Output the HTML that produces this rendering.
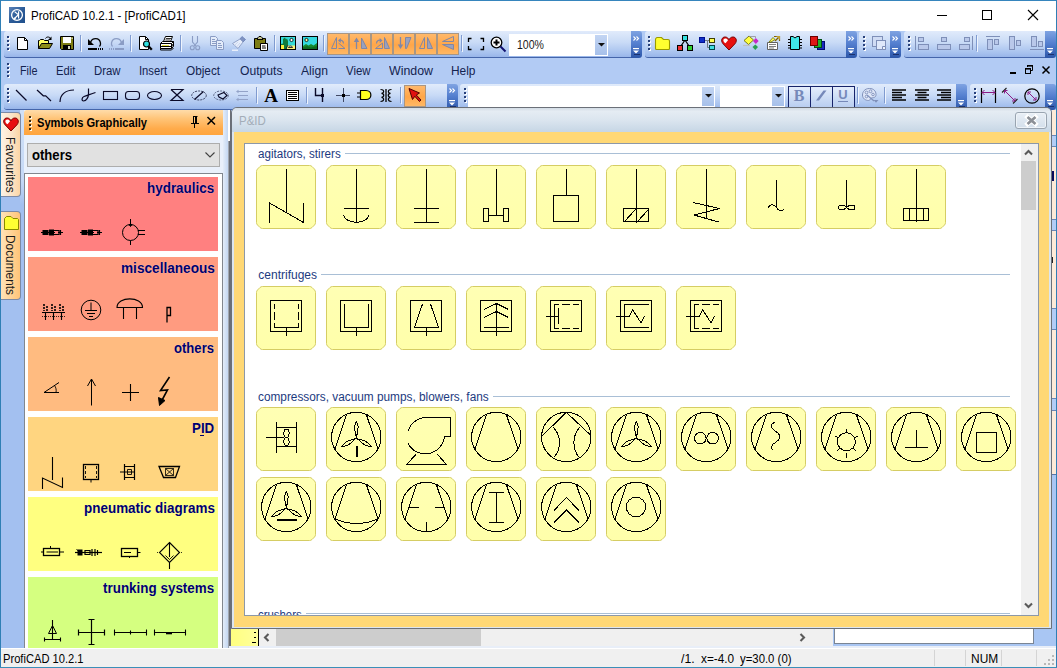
<!DOCTYPE html>
<html lang="en"><head><meta charset="utf-8"><title>ProfiCAD 10.2.1 - [ProfiCAD1]</title>
<style>
*{box-sizing:border-box;margin:0;padding:0}
html,body{width:1057px;height:668px;overflow:hidden;background:#fff}
body{font-family:"Liberation Sans",sans-serif;font-size:12px;color:#000}
#win{position:absolute;left:0;top:0;width:1057px;height:668px;overflow:hidden;background:#b2cbf4}
.abs{position:absolute}
svg{position:absolute;overflow:visible}
/* title */
#title{position:absolute;left:0;top:0;width:1057px;height:31px;background:#fff;border-top:1px solid #3685bd}
/* toolbars */
.tb{position:absolute;height:26px;border-radius:3px 0 0 3px;background:linear-gradient(#e1ebfb 0%,#c8daf6 45%,#a6c1ee 85%,#98b5e9 100%);border-bottom:1px solid #4465aa}
.chev{position:absolute;top:0;width:11px;height:26px;border-radius:0 3px 3px 0;background:linear-gradient(#7fa3e2 0%,#5580d0 45%,#2c56a8 100%)}
.obtn{position:absolute;border:1px solid #a89684;background:linear-gradient(#ffb96c 0%,#ffa648 55%,#ffb865 100%)}
.combo{position:absolute;background:#fff}
.combo .cbtn{position:absolute;right:1px;top:1px;bottom:1px;width:12px;background:linear-gradient(#c3d5f3,#a6c0ea)}
.nbtn{position:absolute;width:23px;height:22px;border:1px solid #16236a;background:linear-gradient(#e4edfb,#b9cef0)}
.vtab{position:absolute;left:1px;width:20px;border:1px solid #7d8aa5;border-left:none;border-radius:0 4px 4px 0}
#pid{position:absolute;left:231px;top:107px;width:821px;height:522px;border:1px solid #6b7078;border-radius:6px 6px 0 0;background:#dce5ee;overflow:hidden}
.pidtitle{position:absolute;left:0;top:0;width:100%;height:24px;background:linear-gradient(#d3dce5 0%,#e5ecf3 14%,#dbe5ef 50%,#c6d6e5 100%)}
.pidclose{position:absolute;left:783px;top:4px;width:32px;height:17px;border:1px solid #99a4b0;border-radius:3px;background:linear-gradient(#e9eff6,#d3dfeb);box-shadow:inset 0 0 0 1px #eef3f8}
.pidframe{position:absolute;left:2px;top:24px;right:2px;bottom:1px;background:#ffd875}
#pidin{position:absolute;left:12px;top:35px;width:795px;height:473px;background:#fff;border:1px solid #8c98a8;overflow:hidden}
#status{position:absolute;left:0;top:648px;width:1057px;height:20px;background:#f0f0f0;border-top:1px solid #fff}

</style></head>
<body>
<div id="win">
<div id="title">
<svg style="left:9px;top:6px" width="16" height="16" viewBox="0 0 16 16">
<defs><linearGradient id="gi" x1="0" y1="0" x2="1" y2="1"><stop offset="0" stop-color="#5b82b8"/><stop offset=".5" stop-color="#2c5c98"/><stop offset="1" stop-color="#1f4f8c"/></linearGradient></defs>
<rect width="16" height="16" fill="url(#gi)"/>
<circle cx="8" cy="8" r="5.4" fill="none" stroke="#fff" stroke-width="1.3"/>
<path d="M9.6 4.3V11.4M9.4 7.8L5.6 4.6M9.4 7.8L5.2 11.8" fill="none" stroke="#fff" stroke-width="1.2"/>
<path d="M4.6 12.4L7.3 11.6L5.6 10.2Z" fill="#fff"/>
</svg>
<div class="abs" style="left:30.50px;top:7.94px;font-size:12px;line-height:14.40px;color:#000;white-space:nowrap;transform-origin:0 0;transform:scaleX(0.9613);">ProfiCAD 10.2.1 - [ProfiCAD1]</div>
<svg style="left:930px;top:0" width="127" height="30" viewBox="930 1 127 30" fill="none" stroke="#000" stroke-width="1">
<path d="M937 15.5H947"/>
<rect x="982.5" y="10.5" width="9" height="9"/>
<path d="M1028 10L1038 20M1038 10L1028 20" stroke-width="1.1"/>
</svg>
</div>
<!-- toolbar row 1 -->
<div class="tb" style="left:4px;top:31px;width:628px;height:27px"></div>
<div class="chev" style="left:631px;top:31px;width:11px;height:27px"><svg style="left:2px;top:5px" width="8" height="6" viewBox="0 0 8 6"><path d="M.5 .5L2.500 2.500L.5 4.500M3.500 .5L5.500 2.500L3.500 4.500" fill="none" stroke="#fff" stroke-width="1.100"/></svg><svg style="left:2px;top:17px" width="8" height="7" viewBox="0 0 8 7"><rect x="0" y="0" width="6" height="1.200" fill="#fff"/><path d="M0 2.500H6L3 5.500Z" fill="#fff"/><path d="M1 6.500H7" stroke="#14265c" stroke-width=".8"/></svg></div>
<i class="abs" style="left:8px;top:37px;width:2px;height:2px;background:#fff"></i><i class="abs" style="left:7px;top:36px;width:2px;height:2px;background:#27407a"></i><i class="abs" style="left:8px;top:41px;width:2px;height:2px;background:#fff"></i><i class="abs" style="left:7px;top:40px;width:2px;height:2px;background:#27407a"></i><i class="abs" style="left:8px;top:45px;width:2px;height:2px;background:#fff"></i><i class="abs" style="left:7px;top:44px;width:2px;height:2px;background:#27407a"></i><i class="abs" style="left:8px;top:49px;width:2px;height:2px;background:#fff"></i><i class="abs" style="left:7px;top:48px;width:2px;height:2px;background:#27407a"></i>
<svg style="left:15px;top:35px" width="16" height="16" viewBox="0 0 16 16"><path d="M2.5 2.5H9.5L12.5 5.5V14.5H2.5Z" fill="#fff" stroke="#000"/><path d="M9.5 2.5V5.5H12.5" fill="none" stroke="#000"/></svg>
<svg style="left:37px;top:35px" width="16" height="16" viewBox="0 0 16 16"><path d="M1.5 13.5V5.5H2.5L3.5 4.5H6.5L7.5 5.5H11.5V8" fill="#ffff66" stroke="#000"/><path d="M1.5 13.5L4.5 8.5H15.5L12.5 13.5Z" fill="#8e8e1a" stroke="#000"/><path d="M8.5 3.5C9.5 1.5 12.5 1.5 13.5 3.5" fill="none" stroke="#000"/><path d="M14.5 1.5V5H11Z" fill="#000"/></svg>
<svg style="left:59px;top:35px" width="16" height="16" viewBox="0 0 16 16"><path d="M1.5 1.5H14.5V14.5H2.5L1.5 13.5Z" fill="#7d7d14" stroke="#000"/><rect x="4" y="2" width="8" height="6" fill="#fff"/><rect x="4" y="10" width="8" height="5" fill="#000"/><rect x="9" y="11" width="2" height="3" fill="#d8d8c0"/><rect x="12.6" y="2.6" width="1" height="1.4" fill="#fff"/></svg>
<i class="abs" style="left:80px;top:35px;width:1px;height:16px;background:#7f9bd0"></i><i class="abs" style="left:81px;top:36px;width:1px;height:16px;background:#eef4fd"></i>
<svg style="left:87px;top:35px" width="16" height="16" viewBox="0 0 16 16"><path d="M3.5 7.5C5 2.5 12.5 2 13.5 8C13.8 10 13 11 12.5 11.5" fill="none" stroke="#000" stroke-width="1.3"/><path d="M1 4V10H7Z" fill="#000"/><rect x="1" y="13" width="9" height="2" fill="#000"/><rect x="11" y="13" width="1" height="2" fill="#000"/><rect x="13" y="13" width="1" height="2" fill="#000"/><rect x="15" y="13" width="1" height="2" fill="#000"/></svg>
<svg style="left:109px;top:35px" width="16" height="16" viewBox="0 0 16 16"><path d="M12.5 7.5C11 2.5 3.5 2 2.5 8C2.2 10 3 11 3.5 11.5" fill="none" stroke="#8a9cc4" stroke-width="1.3"/><path d="M15 4V10H9Z" fill="#8a9cc4"/><rect x="6" y="13" width="9" height="2" fill="#8a9cc4"/><rect x="4" y="13" width="1" height="2" fill="#8a9cc4"/><rect x="2" y="13" width="1" height="2" fill="#8a9cc4"/><rect x="0" y="13" width="1" height="2" fill="#8a9cc4"/></svg>
<i class="abs" style="left:130px;top:35px;width:1px;height:16px;background:#7f9bd0"></i><i class="abs" style="left:131px;top:36px;width:1px;height:16px;background:#eef4fd"></i>
<svg style="left:137px;top:35px" width="16" height="16" viewBox="0 0 16 16"><path d="M2.5 1.5H8.5L11.5 4.5V14.5H2.5Z" fill="#fff" stroke="#000"/><path d="M8.5 1.5V4.5H11.5" fill="none" stroke="#000"/><circle cx="9.5" cy="9" r="3" fill="#30e0e0" stroke="#000" stroke-width="1.2"/><path d="M11.8 11.5L14.8 14.8" stroke="#000" stroke-width="2.2"/></svg>
<svg style="left:159px;top:35px" width="16" height="16" viewBox="0 0 16 16"><path d="M4.5 6.5L6.5 1.5H13.5L11.5 6.5Z" fill="#fff" stroke="#000"/><path d="M7 3.5H12M6.3 5H11" stroke="#000" stroke-width=".8"/><path d="M1.5 8.5L3.5 6.5H14.5V11.5L12.5 13.5H1.5Z" fill="#fff" stroke="#000"/><path d="M1.5 8.5H12.5L14.5 6.5M12.5 8.5V13.5" fill="none" stroke="#000"/><path d="M2 11.5H12" stroke="#000"/><rect x="3" y="10" width="7" height="1" fill="#e8e040"/><path d="M1.5 13.5V15H12.5L14.5 13" fill="none" stroke="#000"/><path d="M13.5 9V11.5" stroke="#000" stroke-width=".7"/></svg>
<i class="abs" style="left:180px;top:35px;width:1px;height:16px;background:#7f9bd0"></i><i class="abs" style="left:181px;top:36px;width:1px;height:16px;background:#eef4fd"></i>
<svg style="left:187px;top:35px" width="16" height="16" viewBox="0 0 16 16"><path d="M5.5 1V7L9 11M10.5 1V7L7 11" fill="none" stroke="#8a9cc4" stroke-width="1.1"/><circle cx="5.3" cy="12.7" r="2" fill="none" stroke="#8a9cc4" stroke-width="1.1"/><circle cx="10.7" cy="12.7" r="2" fill="none" stroke="#8a9cc4" stroke-width="1.1"/></svg>
<svg style="left:209px;top:35px" width="16" height="16" viewBox="0 0 16 16"><path d="M1.5 1.5H6.5L8.5 3.5V10.5H1.5Z" fill="#e4ecfa" stroke="#8a9cc4"/><path d="M3 4.5H6M3 6.5H7M3 8.5H7" stroke="#8a9cc4"/><path d="M7.5 5.5H12.5L14.5 7.5V14.5H7.5Z" fill="#e4ecfa" stroke="#8a9cc4"/><path d="M9 8.5H12M9 10.5H13M9 12.5H13" stroke="#8a9cc4"/></svg>
<svg style="left:231px;top:35px" width="16" height="16" viewBox="0 0 16 16"><path d="M11 1.5L14.5 4.5L12 7L9 4Z" fill="#7f93c2" stroke="#6a7fb5" stroke-width=".8"/><path d="M9 4L12 7L7 13.5L1.5 8.5Z" fill="#e6edfa" stroke="#8a9cc4" stroke-width=".9"/><path d="M3.5 10.5L7 7M5.5 12L9 8" stroke="#c5d2ec" stroke-width=".8"/><rect x="1" y="14.5" width="6" height="1.5" fill="#e8eefa"/></svg>
<svg style="left:253px;top:35px" width="16" height="16" viewBox="0 0 16 16"><path d="M1.5 3.5H12.5V13.5H1.5Z" fill="#7d7d14" stroke="#000"/><path d="M4.5 4.5V3L6 1.5H8L9.5 3V4.5Z" fill="#c8c890" stroke="#000"/><path d="M7.5 8.5H14.5V15.5H7.5Z" fill="#fff" stroke="#000"/><path d="M9 11H12.5M9 13H13" stroke="#000" stroke-width="1"/><path d="M4 4.5H10" stroke="#000"/></svg>
<i class="abs" style="left:274px;top:35px;width:1px;height:16px;background:#7f9bd0"></i><i class="abs" style="left:275px;top:36px;width:1px;height:16px;background:#eef4fd"></i>
<svg style="left:280px;top:35px" width="16" height="16" viewBox="0 0 16 16"><rect x=".5" y="1.5" width="15" height="13" fill="#35d9d9" stroke="#000"/><path d="M1 14V9L3 8.5V4L5 2.5L6 4.5L7 3.5L8 6V10L6 14Z" fill="#117a3a"/><path d="M1 10H4V14H1Z" fill="#ffef3a"/><path d="M7 14V10.5H15V14Z" fill="#fff27a"/><path d="M8.5 12.5C9 10.5 12 10.5 12.5 12.5Z" fill="#fff" stroke="#000" stroke-width=".8"/><circle cx="11.5" cy="5" r="1.6" fill="#fff" stroke="#000" stroke-width=".8"/><path d="M6 14L8 10" stroke="#000" stroke-width=".8"/></svg>
<svg style="left:302px;top:35px" width="16" height="16" viewBox="0 0 16 16"><rect x=".5" y="1.5" width="15" height="13" fill="#35d9e0" stroke="#000"/><path d="M1 14V11L4 9L6.5 10.5L9 9L11.5 10.5L15 8V14Z" fill="#168a2e"/><path d="M1 14V12.5L5 11L9 12.5L15 11V14Z" fill="#0e6a22"/><circle cx="4.5" cy="5" r="1.6" fill="#fffca0" stroke="#000" stroke-width=".8"/></svg>
<i class="abs" style="left:323px;top:35px;width:1px;height:16px;background:#7f9bd0"></i><i class="abs" style="left:324px;top:36px;width:1px;height:16px;background:#eef4fd"></i>
<div class="obtn" style="left:327px;top:33px;width:22px;height:22px"></div>
<svg style="left:330px;top:35px" width="16" height="16" viewBox="0 0 16 16"><path d="M6.5 2.5V13.5H1.5Z" fill="none" stroke="#8087a6"/><path d="M8.5 13.5H15L8.5 8" fill="none" stroke="#8087a6"/><path d="M9 5.5C11.5 4.5 13.5 6 13.5 8.5" fill="none" stroke="#8087a6" stroke-width="1.2"/><path d="M8 5.5L10.8 3V8Z" fill="#8087a6"/></svg>
<div class="obtn" style="left:349px;top:33px;width:22px;height:22px"></div>
<svg style="left:352px;top:35px" width="16" height="16" viewBox="0 0 16 16"><path d="M4.5 4V14" stroke="#8087a6" stroke-width="1.3"/><path d="M1.8 7L4.5 2.5L7.2 7Z" fill="#8087a6"/><path d="M9.5 3V13.5H15Z" fill="#9aa1bd" stroke="#8087a6"/></svg>
<div class="obtn" style="left:371px;top:33px;width:22px;height:22px"></div>
<svg style="left:374px;top:35px" width="16" height="16" viewBox="0 0 16 16"><path d="M10.5 2.5V13.5H15.5Z" fill="#9aa1bd" stroke="#8087a6"/><path d="M1.5 13.5H8.5V8Z" fill="none" stroke="#8087a6"/><path d="M7 5.5C4.5 4.5 2.5 6 2.5 8.5" fill="none" stroke="#8087a6" stroke-width="1.2"/><path d="M8.5 5.5L5.7 3V8Z" fill="#8087a6"/></svg>
<div class="obtn" style="left:393px;top:33px;width:22px;height:22px"></div>
<svg style="left:396px;top:35px" width="16" height="16" viewBox="0 0 16 16"><path d="M4.5 2V11" stroke="#8087a6" stroke-width="1.3"/><path d="M1.8 9.5L4.5 14L7.2 9.5Z" fill="#8087a6"/><path d="M9.5 2.5H15L10.5 13.5H9.5Z" fill="#9aa1bd" stroke="#8087a6"/></svg>
<div class="obtn" style="left:415px;top:33px;width:22px;height:22px"></div>
<svg style="left:418px;top:35px" width="16" height="16" viewBox="0 0 16 16"><path d="M6.5 2.5V13.5H1.5Z" fill="none" stroke="#8087a6"/><path d="M9.5 2.5V13.5H14.5Z" fill="#9aa1bd" stroke="#8087a6"/></svg>
<div class="obtn" style="left:437px;top:33px;width:22px;height:22px"></div>
<svg style="left:440px;top:35px" width="16" height="16" viewBox="0 0 16 16"><path d="M13.5 6.5H2.5L13.5 1.5Z" fill="none" stroke="#8087a6"/><path d="M13.5 9.5H2.5L13.5 14.5Z" fill="#9aa1bd" stroke="#8087a6"/></svg>
<i class="abs" style="left:461px;top:35px;width:1px;height:16px;background:#7f9bd0"></i><i class="abs" style="left:462px;top:36px;width:1px;height:16px;background:#eef4fd"></i>
<svg style="left:468px;top:35px" width="16" height="16" viewBox="0 0 16 16"><path d="M3.500 3.500H.5V7M.5 11V14.500H3.500M12.500 3.500H15.500V7M15.500 11V14.500H12.500" fill="none" stroke="#000" stroke-width="1.300"/></svg>
<svg style="left:490px;top:35px" width="16" height="16" viewBox="0 0 16 16"><circle cx="6.500" cy="7.500" r="5.300" fill="#fff" stroke="#000" stroke-width="1.300"/><path d="M3.500 7.500H9.500M6.500 4.500V10.500" stroke="#000" stroke-width="2"/><path d="M10.500 11.500L15.500 16.500" stroke="#101070" stroke-width="2"/></svg>
<div class="combo" style="left:509px;top:34px;width:99px;height:22px"><div class="cbtn"><svg style="left:3px;top:8px" width="7" height="4" viewBox="0 0 7 4"><path d="M0 0H7L3.500 3.600Z" fill="#101010"/></svg></div></div>
<div class="abs" style="left:516.50px;top:37.94px;font-size:12px;line-height:14.40px;color:#1a1a1a;white-space:nowrap;transform-origin:0 0;transform:scaleX(0.8797);">100%</div>
<div class="tb" style="left:645px;top:31px;width:202px;height:27px"></div>
<div class="chev" style="left:846px;top:31px;width:11px;height:27px"><svg style="left:2px;top:5px" width="8" height="6" viewBox="0 0 8 6"><path d="M.5 .5L2.500 2.500L.5 4.500M3.500 .5L5.500 2.500L3.500 4.500" fill="none" stroke="#fff" stroke-width="1.100"/></svg><svg style="left:2px;top:17px" width="8" height="7" viewBox="0 0 8 7"><rect x="0" y="0" width="6" height="1.200" fill="#fff"/><path d="M0 2.500H6L3 5.500Z" fill="#fff"/><path d="M1 6.500H7" stroke="#14265c" stroke-width=".8"/></svg></div>
<i class="abs" style="left:649px;top:37px;width:2px;height:2px;background:#fff"></i><i class="abs" style="left:648px;top:36px;width:2px;height:2px;background:#27407a"></i><i class="abs" style="left:649px;top:41px;width:2px;height:2px;background:#fff"></i><i class="abs" style="left:648px;top:40px;width:2px;height:2px;background:#27407a"></i><i class="abs" style="left:649px;top:45px;width:2px;height:2px;background:#fff"></i><i class="abs" style="left:648px;top:44px;width:2px;height:2px;background:#27407a"></i><i class="abs" style="left:649px;top:49px;width:2px;height:2px;background:#fff"></i><i class="abs" style="left:648px;top:48px;width:2px;height:2px;background:#27407a"></i>
<svg style="left:655px;top:35px" width="16" height="16" viewBox="0 0 16 16"><path d="M.5 13.500V4.500Q.5 3 2 2.500H6.500L8.500 4.500H13Q14.500 4.500 14.500 6V13.500Q14.500 14.500 13.500 14.500H1.500Q.5 14.500 .5 13.500Z" fill="#ffff30" stroke="#9a9a00" stroke-width="1.100"/></svg>
<svg style="left:677px;top:35px" width="16" height="16" viewBox="0 0 16 16"><path d="M8 5L4 11M8 5L12 11" stroke="#000" stroke-width="1.3"/><rect x="5.5" y=".5" width="5" height="5" fill="#35e0e0" stroke="#000"/><rect x=".5" y="10.5" width="5" height="5" fill="#f03030" stroke="#000"/><rect x="10.5" y="10.5" width="5" height="5" fill="#30d030" stroke="#000"/></svg>
<svg style="left:699px;top:35px" width="16" height="16" viewBox="0 0 16 16"><path d="M6 5.500H8.500V12.500H11M8.500 5.500H11" fill="none" stroke="#707880"/><rect x=".5" y="2.500" width="5" height="5" fill="#1030c8" stroke="#001090"/><rect x="10.500" y="3.500" width="5" height="4" fill="#ffff50" stroke="#404000"/><rect x="10.500" y="10.500" width="5" height="4" fill="#40e0e0" stroke="#004848"/></svg>
<svg style="left:721px;top:35px" width="16" height="16" viewBox="0 0 16 16"><path d="M8 15L1.8 8.5C-0.5 5.5 1 2 4 2C6 2 7.3 3.2 8 4.8C8.7 3.2 10 2 12 2C15 2 16.5 5.5 14.2 8.5Z" fill="#e81010" stroke="#7a0000" stroke-width="1"/><path d="M2.500 4.500C3.500 3 6 3.200 7 5.200L4.500 8.200C2.800 7.500 2 5.800 2.500 4.500Z" fill="#fff"/></svg>
<svg style="left:743px;top:35px" width="16" height="16" viewBox="0 0 16 16"><path d="M1 5.500L6 1L10.500 5L5.500 9.500Z" fill="#ffff40" stroke="#707000" stroke-width=".9"/><path d="M0 10.500H7" stroke="#c0c0c0" stroke-width="1.200"/><path d="M6 1.500H12.500V3" fill="none" stroke="#909090" stroke-width=".8"/><path d="M10 6L12.800 3L15.600 6L12.800 9Z" fill="#c828c8"/><path d="M9.500 12L12.300 9.500L15 12L12.300 15Z" fill="#28a050"/></svg>
<svg style="left:765px;top:35px" width="16" height="16" viewBox="0 0 16 16"><path d="M2.5 7.5H12.5V14.5H2.5Z" fill="#fff" stroke="#606060"/><path d="M4 9.5H11M4 11.5H11M4 13H9" stroke="#707070" stroke-width=".9"/><path d="M4 7L8 2.5L10 4.5L6 7Z" fill="#ffff60" stroke="#707000" stroke-width=".8"/><path d="M9 1.5H14.5V6" fill="none" stroke="#806000" stroke-width="1.2"/><path d="M10 6L14.5 1.5" stroke="#806000" stroke-width="1.2"/><path d="M11 1H15V5Z" fill="#c0a030"/></svg>
<svg style="left:787px;top:35px" width="16" height="16" viewBox="0 0 16 16"><path d="M3.5 1.5H6L8 3L10 1.5H12.5V14.5H3.5Z" fill="#40e8e8" stroke="#000"/><path d="M1 4.5H3M1 7.5H3M1 10.5H3M1 13H3M13 4.5H15M13 7.5H15M13 10.5H15M13 13H15" stroke="#000"/></svg>
<svg style="left:809px;top:35px" width="16" height="16" viewBox="0 0 16 16"><rect x="8.5" y="6.5" width="7" height="8" fill="#1828c0" stroke="#000870"/><rect x="5.5" y="4.5" width="7" height="8" fill="#20b030" stroke="#005010"/><rect x="1.5" y="1.5" width="7" height="9" fill="#e01818" stroke="#700000"/></svg>
<div class="tb" style="left:859px;top:31px;width:32px;height:27px"></div>
<div class="chev" style="left:890px;top:31px;width:11px;height:27px"><svg style="left:2px;top:5px" width="8" height="6" viewBox="0 0 8 6"><path d="M.5 .5L2.500 2.500L.5 4.500M3.500 .5L5.500 2.500L3.500 4.500" fill="none" stroke="#fff" stroke-width="1.100"/></svg><svg style="left:2px;top:17px" width="8" height="7" viewBox="0 0 8 7"><rect x="0" y="0" width="6" height="1.200" fill="#fff"/><path d="M0 2.500H6L3 5.500Z" fill="#fff"/><path d="M1 6.500H7" stroke="#14265c" stroke-width=".8"/></svg></div>
<i class="abs" style="left:864px;top:37px;width:2px;height:2px;background:#fff"></i><i class="abs" style="left:863px;top:36px;width:2px;height:2px;background:#27407a"></i><i class="abs" style="left:864px;top:41px;width:2px;height:2px;background:#fff"></i><i class="abs" style="left:863px;top:40px;width:2px;height:2px;background:#27407a"></i><i class="abs" style="left:864px;top:45px;width:2px;height:2px;background:#fff"></i><i class="abs" style="left:863px;top:44px;width:2px;height:2px;background:#27407a"></i><i class="abs" style="left:864px;top:49px;width:2px;height:2px;background:#fff"></i><i class="abs" style="left:863px;top:48px;width:2px;height:2px;background:#27407a"></i>
<svg style="left:871px;top:35px" width="16" height="16" viewBox="0 0 16 16"><rect x="1.5" y="1.5" width="10" height="10" fill="#d0dcf4" stroke="#7e8fb8"/><rect x="5.5" y="5.5" width="9" height="9" fill="#dfe8fa" stroke="#7e8fb8"/><path d="M11.5 11.5H14.5V14.5H11.5Z" fill="#eef3fc" stroke="#7e8fb8"/></svg>
<div class="tb" style="left:904px;top:31px;width:142px;height:27px"></div>
<div class="chev" style="left:1045px;top:31px;width:11px;height:27px"><svg style="left:2px;top:17px" width="8" height="7" viewBox="0 0 8 7"><rect x="0" y="0" width="6" height="1.200" fill="#fff"/><path d="M0 2.500H6L3 5.500Z" fill="#fff"/><path d="M1 6.500H7" stroke="#14265c" stroke-width=".8"/></svg></div>
<i class="abs" style="left:909px;top:37px;width:2px;height:2px;background:#fff"></i><i class="abs" style="left:908px;top:36px;width:2px;height:2px;background:#27407a"></i><i class="abs" style="left:909px;top:41px;width:2px;height:2px;background:#fff"></i><i class="abs" style="left:908px;top:40px;width:2px;height:2px;background:#27407a"></i><i class="abs" style="left:909px;top:45px;width:2px;height:2px;background:#fff"></i><i class="abs" style="left:908px;top:44px;width:2px;height:2px;background:#27407a"></i><i class="abs" style="left:909px;top:49px;width:2px;height:2px;background:#fff"></i><i class="abs" style="left:908px;top:48px;width:2px;height:2px;background:#27407a"></i>
<svg style="left:914px;top:35px" width="16" height="16" viewBox="0 0 16 16"><path d="M1.5 1V15" stroke="#7e8fb8"/><rect x="4.5" y="2.5" width="5" height="4" fill="#b9c8ea" stroke="#7e8fb8"/><rect x="4.5" y="9.5" width="10" height="5" fill="#b9c8ea" stroke="#7e8fb8"/></svg>
<svg style="left:936px;top:35px" width="16" height="16" viewBox="0 0 16 16"><rect x="5.5" y="2.5" width="5" height="4" fill="#b9c8ea" stroke="#7e8fb8"/><rect x="1.5" y="9.5" width="13" height="5" fill="#b9c8ea" stroke="#7e8fb8"/></svg>
<svg style="left:958px;top:35px" width="16" height="16" viewBox="0 0 16 16"><path d="M14.5 1V15" stroke="#7e8fb8"/><rect x="6.5" y="2.5" width="5" height="4" fill="#b9c8ea" stroke="#7e8fb8"/><rect x="1.5" y="9.5" width="10" height="5" fill="#b9c8ea" stroke="#7e8fb8"/></svg>
<i class="abs" style="left:976px;top:35px;width:1px;height:16px;background:#7f9bd0"></i><i class="abs" style="left:977px;top:36px;width:1px;height:16px;background:#eef4fd"></i>
<svg style="left:985px;top:35px" width="16" height="16" viewBox="0 0 16 16"><path d="M1 1.5H15" stroke="#7e8fb8"/><rect x="2.5" y="4.5" width="5" height="10" fill="#b9c8ea" stroke="#7e8fb8"/><rect x="9.5" y="4.5" width="4" height="5" fill="#b9c8ea" stroke="#7e8fb8"/></svg>
<svg style="left:1007px;top:35px" width="16" height="16" viewBox="0 0 16 16"><rect x="2.5" y="1.5" width="5" height="13" fill="#b9c8ea" stroke="#7e8fb8"/><rect x="9.5" y="5.5" width="4" height="5" fill="#b9c8ea" stroke="#7e8fb8"/></svg>
<svg style="left:1029px;top:35px" width="16" height="16" viewBox="0 0 16 16"><path d="M1 14.5H15" stroke="#7e8fb8"/><rect x="2.5" y="1.5" width="5" height="10" fill="#b9c8ea" stroke="#7e8fb8"/><rect x="9.5" y="6.5" width="4" height="5" fill="#b9c8ea" stroke="#7e8fb8"/></svg>
<!-- menu bar -->
<i class="abs" style="left:8px;top:64px;width:2px;height:2px;background:#fff"></i><i class="abs" style="left:7px;top:63px;width:2px;height:2px;background:#27407a"></i><i class="abs" style="left:8px;top:68px;width:2px;height:2px;background:#fff"></i><i class="abs" style="left:7px;top:67px;width:2px;height:2px;background:#27407a"></i><i class="abs" style="left:8px;top:72px;width:2px;height:2px;background:#fff"></i><i class="abs" style="left:7px;top:71px;width:2px;height:2px;background:#27407a"></i><i class="abs" style="left:8px;top:76px;width:2px;height:2px;background:#fff"></i><i class="abs" style="left:7px;top:75px;width:2px;height:2px;background:#27407a"></i>
<div class="abs" style="left:20.40px;top:63.94px;font-size:12px;line-height:14.40px;color:#14234f;white-space:nowrap;transform-origin:0 0;transform:scaleX(0.8999);">File</div>
<div class="abs" style="left:56.40px;top:63.94px;font-size:12px;line-height:14.40px;color:#14234f;white-space:nowrap;transform-origin:0 0;transform:scaleX(0.9334);">Edit</div>
<div class="abs" style="left:94.20px;top:63.94px;font-size:12px;line-height:14.40px;color:#14234f;white-space:nowrap;transform-origin:0 0;transform:scaleX(0.9464);">Draw</div>
<div class="abs" style="left:139.40px;top:63.94px;font-size:12px;line-height:14.40px;color:#14234f;white-space:nowrap;transform-origin:0 0;transform:scaleX(0.9363);">Insert</div>
<div class="abs" style="left:186.40px;top:63.94px;font-size:12px;line-height:14.40px;color:#14234f;white-space:nowrap;transform-origin:0 0;transform:scaleX(0.9832);">Object</div>
<div class="abs" style="left:239.50px;top:63.94px;font-size:12px;line-height:14.40px;color:#14234f;white-space:nowrap;transform-origin:0 0;transform:scaleX(1.0113);">Outputs</div>
<div class="abs" style="left:300.50px;top:63.94px;font-size:12px;line-height:14.40px;color:#14234f;white-space:nowrap;transform-origin:0 0;transform:scaleX(1.0118);">Align</div>
<div class="abs" style="left:346.00px;top:63.94px;font-size:12px;line-height:14.40px;color:#14234f;white-space:nowrap;transform-origin:0 0;transform:scaleX(0.9499);">View</div>
<div class="abs" style="left:389.00px;top:63.94px;font-size:12px;line-height:14.40px;color:#14234f;white-space:nowrap;transform-origin:0 0;transform:scaleX(1.0309);">Window</div>
<div class="abs" style="left:451.00px;top:63.94px;font-size:12px;line-height:14.40px;color:#14234f;white-space:nowrap;transform-origin:0 0;transform:scaleX(0.9927);">Help</div>
<svg style="left:1005px;top:62px" width="50" height="16" viewBox="1005 62 50 16"><rect x="1010" y="72" width="6" height="2" fill="#000"/>
<path d="M1027.5 67V65.5H1032.5V70.5H1031" fill="none" stroke="#000" stroke-width="1"/><rect x="1027" y="65" width="6" height="1.6" fill="#000"/>
<rect x="1025.500" y="68.500" width="5" height="5" fill="none" stroke="#000"/><rect x="1025" y="68" width="6" height="1.6" fill="#000"/>
<path d="M1042.500 66.500L1049.500 73.500M1049.500 66.500L1042.500 73.500" stroke="#000" stroke-width="1.500"/></svg>
<!-- toolbar row 3 -->
<div class="tb" style="left:4px;top:84px;width:444px;height:26px"></div>
<div class="chev" style="left:447px;top:84px;width:11px;height:26px"><svg style="left:2px;top:4px" width="8" height="6" viewBox="0 0 8 6"><path d="M.5 .5L2.500 2.500L.5 4.500M3.500 .5L5.500 2.500L3.500 4.500" fill="none" stroke="#fff" stroke-width="1.100"/></svg><svg style="left:2px;top:16px" width="8" height="7" viewBox="0 0 8 7"><rect x="0" y="0" width="6" height="1.200" fill="#fff"/><path d="M0 2.500H6L3 5.500Z" fill="#fff"/><path d="M1 6.500H7" stroke="#14265c" stroke-width=".8"/></svg></div>
<i class="abs" style="left:8px;top:89px;width:2px;height:2px;background:#fff"></i><i class="abs" style="left:7px;top:88px;width:2px;height:2px;background:#27407a"></i><i class="abs" style="left:8px;top:93px;width:2px;height:2px;background:#fff"></i><i class="abs" style="left:7px;top:92px;width:2px;height:2px;background:#27407a"></i><i class="abs" style="left:8px;top:97px;width:2px;height:2px;background:#fff"></i><i class="abs" style="left:7px;top:96px;width:2px;height:2px;background:#27407a"></i><i class="abs" style="left:8px;top:101px;width:2px;height:2px;background:#fff"></i><i class="abs" style="left:7px;top:100px;width:2px;height:2px;background:#27407a"></i>
<svg style="left:15px;top:87px" width="16" height="16" viewBox="0 0 16 16"><path d="M1 3L11.5 13.5" stroke="#0a0a28" stroke-width="1.2"/></svg>
<svg style="left:37px;top:87px" width="16" height="16" viewBox="0 0 16 16"><path d="M0 3L6.3 8.8H8.7L14 14" fill="none" stroke="#0a0a28" stroke-width="1.2"/></svg>
<svg style="left:59px;top:87px" width="16" height="16" viewBox="0 0 16 16"><path d="M1 15C1 8 6 3 15 3" fill="none" stroke="#0a0a28" stroke-width="1.2"/></svg>
<svg style="left:81px;top:87px" width="16" height="16" viewBox="0 0 16 16"><path d="M7.5 1.5V7C7.5 10 5.5 14 2.5 14C0.5 14 0.5 10.5 3 9.5C6 8.5 10 7 14.5 5.5" fill="none" stroke="#0a0a28" stroke-width="1.2"/></svg>
<svg style="left:103px;top:87px" width="16" height="16" viewBox="0 0 16 16"><rect x=".5" y="4.5" width="14" height="8" fill="none" stroke="#0a0a28" stroke-width="1.1"/></svg>
<svg style="left:125px;top:87px" width="16" height="16" viewBox="0 0 16 16"><rect x=".5" y="4.5" width="14" height="8" rx="3" fill="none" stroke="#0a0a28" stroke-width="1.1"/></svg>
<svg style="left:147px;top:87px" width="16" height="16" viewBox="0 0 16 16"><ellipse cx="7.5" cy="8.5" rx="7" ry="4" fill="none" stroke="#0a0a28" stroke-width="1.1"/></svg>
<svg style="left:169px;top:87px" width="16" height="16" viewBox="0 0 16 16"><path d="M2 2.5H14L2 13.5H14L2 2.5" fill="none" stroke="#0a0a28" stroke-width="1.2"/></svg>
<svg style="left:191px;top:87px" width="16" height="16" viewBox="0 0 16 16"><ellipse cx="8" cy="8.5" rx="7.3" ry="4.5" fill="none" stroke="#3a4260" stroke-width="1" stroke-dasharray="2 1"/><path d="M3.5 12.5L12.5 4.5" stroke="#0a0a28" stroke-width="1.2"/></svg>
<svg style="left:213px;top:87px" width="16" height="16" viewBox="0 0 16 16"><ellipse cx="8" cy="8.5" rx="7.3" ry="4.5" fill="none" stroke="#5a6484" stroke-width="1" stroke-dasharray="2 1"/><path d="M5 8L11 5.5L14 8.5L10 12L6 10Z" fill="none" stroke="#0a0a28" stroke-width="1.1"/></svg>
<svg style="left:235px;top:87px" width="16" height="16" viewBox="0 0 16 16"><path d="M3 4.5H13M3 8.5H13M3 12.5H13" stroke="#93a3c8" stroke-width="1"/><path d="M1 4.5L3.5 2.8V6.2ZM1 12.5L3.5 10.8V14.2Z" fill="#93a3c8"/></svg>
<i class="abs" style="left:256px;top:87px;width:1px;height:16px;background:#7f9bd0"></i><i class="abs" style="left:257px;top:88px;width:1px;height:16px;background:#eef4fd"></i>
<svg style="left:263px;top:87px" width="16" height="16" viewBox="0 0 16 16"><text x="8" y="15" text-anchor="middle" font-family="Liberation Serif,serif" font-weight="bold" font-size="19" fill="#000">A</text></svg>
<svg style="left:285px;top:87px" width="16" height="16" viewBox="0 0 16 16"><rect x="1.500" y="3.500" width="12" height="10" fill="#fff" stroke="#000" stroke-width="1"/><path d="M3 5.500H12M3 7.500H12M3 9.500H12M3 11.500H12" stroke="#000" stroke-width="1" shape-rendering="crispEdges"/></svg>
<i class="abs" style="left:306px;top:87px;width:1px;height:16px;background:#7f9bd0"></i><i class="abs" style="left:307px;top:88px;width:1px;height:16px;background:#eef4fd"></i>
<svg style="left:313px;top:87px" width="16" height="16" viewBox="0 0 16 16"><path d="M2.5 1V8.5H9.5M9.5 1V15" fill="none" stroke="#0a0a28" stroke-width="1.4"/><rect x="8" y="7" width="3" height="3" fill="#0a0a28"/></svg>
<svg style="left:335px;top:87px" width="16" height="16" viewBox="0 0 16 16"><path d="M1 8.5H15M8.5 1V15" stroke="#333a55" stroke-width=".9"/><rect x="7" y="7" width="3" height="3" fill="#000"/></svg>
<svg style="left:357px;top:87px" width="16" height="16" viewBox="0 0 16 16"><path d="M3.5 3.5H9C15.5 3.5 15.5 12.5 9 12.5H3.5Z" fill="#ffff20" stroke="#000" stroke-width="1.2"/><path d="M0 6H3.5M0 10H3.5" stroke="#000" stroke-width="1.1"/></svg>
<svg style="left:379px;top:87px" width="16" height="16" viewBox="0 0 16 16"><path d="M7 2V15" stroke="#000" stroke-width="1.300"/><path d="M1.500 2.500C5.500 2.500 5.500 6 2.500 6.300C5.500 6.600 5.500 10 2.500 10.300C5.500 10.600 5.500 14.500 1.500 14.500" fill="none" stroke="#000" stroke-width="1.200"/><path d="M12.500 2.500C8.500 2.500 8.500 6 11.500 6.300C8.500 6.600 8.500 10 11.500 10.300C8.500 10.600 8.500 14.500 12.500 14.500" fill="none" stroke="#000" stroke-width="1.200"/></svg>
<i class="abs" style="left:400px;top:87px;width:1px;height:16px;background:#7f9bd0"></i><i class="abs" style="left:401px;top:88px;width:1px;height:16px;background:#eef4fd"></i>
<div class="obtn" style="left:404px;top:85px;width:22px;height:22px"></div>
<svg style="left:407px;top:87px" width="16" height="16" viewBox="0 0 16 16"><path d="M2 1.5L12.5 6L9.3 8L14 13L12.5 14.5L7.8 9.3L5.5 12.5Z" fill="#e01010" stroke="#500000" stroke-width="1"/></svg>
<div class="tb" style="left:460px;top:84px;width:497px;height:26px"></div>
<div class="chev" style="left:956px;top:84px;width:11px;height:26px"><svg style="left:2px;top:16px" width="8" height="7" viewBox="0 0 8 7"><rect x="0" y="0" width="6" height="1.200" fill="#fff"/><path d="M0 2.500H6L3 5.500Z" fill="#fff"/><path d="M1 6.500H7" stroke="#14265c" stroke-width=".8"/></svg></div>
<i class="abs" style="left:465px;top:89px;width:2px;height:2px;background:#fff"></i><i class="abs" style="left:464px;top:88px;width:2px;height:2px;background:#27407a"></i><i class="abs" style="left:465px;top:93px;width:2px;height:2px;background:#fff"></i><i class="abs" style="left:464px;top:92px;width:2px;height:2px;background:#27407a"></i><i class="abs" style="left:465px;top:97px;width:2px;height:2px;background:#fff"></i><i class="abs" style="left:464px;top:96px;width:2px;height:2px;background:#27407a"></i><i class="abs" style="left:465px;top:101px;width:2px;height:2px;background:#fff"></i><i class="abs" style="left:464px;top:100px;width:2px;height:2px;background:#27407a"></i>
<div class="combo" style="left:468px;top:86px;width:247px;height:21px"><div class="cbtn"><svg style="left:3px;top:7px" width="7" height="4" viewBox="0 0 7 4"><path d="M0 0H7L3.500 3.600Z" fill="#101010"/></svg></div></div>
<div class="combo" style="left:720px;top:86px;width:65px;height:21px"><div class="cbtn"><svg style="left:3px;top:7px" width="7" height="4" viewBox="0 0 7 4"><path d="M0 0H7L3.500 3.600Z" fill="#101010"/></svg></div></div>
<div class="nbtn" style="left:788px;top:86px"></div><svg style="left:791px;top:87px" width="16" height="16" viewBox="0 0 16 16"><text x="8" y="14" text-anchor="middle" font-family="Liberation Serif,serif" font-weight="bold" font-size="16" fill="#7689b9">B</text></svg>
<div class="nbtn" style="left:810px;top:86px"></div><svg style="left:813px;top:87px" width="16" height="16" viewBox="0 0 16 16"><path d="M3 13.5L10.5 3.5H13.5L6 13.5Z" fill="#7689b9"/></svg>
<div class="nbtn" style="left:832px;top:86px"></div><svg style="left:835px;top:87px" width="16" height="16" viewBox="0 0 16 16"><text x="8" y="12" text-anchor="middle" font-family="Liberation Sans,sans-serif" font-weight="bold" font-size="13" fill="#7689b9">U</text><rect x="3" y="14" width="10" height="1" fill="#7689b9"/></svg>
<i class="abs" style="left:857px;top:87px;width:1px;height:16px;background:#7f9bd0"></i><i class="abs" style="left:858px;top:88px;width:1px;height:16px;background:#eef4fd"></i>
<svg style="left:862px;top:87px" width="16" height="16" viewBox="0 0 16 16"><path d="M7.5 1.5C2.5 1.5 .5 5 .5 8C.5 11.5 3.5 13.5 6.5 13.5C8.5 13.5 8 11.5 9.5 11C11 10.5 14 11 14 7.5C14 4 11.5 1.5 7.5 1.5Z" fill="#dfe7f8" stroke="#7f90ba"/><circle cx="4.5" cy="5.5" r="1.4" fill="none" stroke="#7f90ba" stroke-width=".9"/><circle cx="8.5" cy="4.3" r="1.4" fill="none" stroke="#7f90ba" stroke-width=".9"/><circle cx="11" cy="7.5" r="1.3" fill="none" stroke="#7f90ba" stroke-width=".9"/><circle cx="4.5" cy="9.5" r="1.3" fill="none" stroke="#7f90ba" stroke-width=".9"/><path d="M5 8L12 14" stroke="#7f90ba" stroke-width="1.2"/><path d="M11.5 13H16.5L14 15.8Z" fill="#7f90ba"/></svg>
<i class="abs" style="left:884px;top:87px;width:1px;height:16px;background:#7f9bd0"></i><i class="abs" style="left:885px;top:88px;width:1px;height:16px;background:#eef4fd"></i>
<svg style="left:891px;top:87px" width="16" height="16" viewBox="0 0 16 16"><path d="M1 3H15M1 5.5H11M1 8H15M1 10.5H11M1 13H15" stroke="#000" stroke-width="1.3"/></svg>
<svg style="left:914px;top:87px" width="16" height="16" viewBox="0 0 16 16"><path d="M1 3H15M3.5 5.5H12.5M1 8H15M3.5 10.5H12.5M1 13H15" stroke="#000" stroke-width="1.3"/></svg>
<svg style="left:936px;top:87px" width="16" height="16" viewBox="0 0 16 16"><path d="M1 3H15M5 5.5H15M1 8H15M5 10.5H15M1 13H15" stroke="#000" stroke-width="1.3"/></svg>
<div class="tb" style="left:970px;top:84px;width:76px;height:26px"></div>
<div class="chev" style="left:1045px;top:84px;width:11px;height:26px"><svg style="left:2px;top:16px" width="8" height="7" viewBox="0 0 8 7"><rect x="0" y="0" width="6" height="1.200" fill="#fff"/><path d="M0 2.500H6L3 5.500Z" fill="#fff"/><path d="M1 6.500H7" stroke="#14265c" stroke-width=".8"/></svg></div>
<i class="abs" style="left:975px;top:89px;width:2px;height:2px;background:#fff"></i><i class="abs" style="left:974px;top:88px;width:2px;height:2px;background:#27407a"></i><i class="abs" style="left:975px;top:93px;width:2px;height:2px;background:#fff"></i><i class="abs" style="left:974px;top:92px;width:2px;height:2px;background:#27407a"></i><i class="abs" style="left:975px;top:97px;width:2px;height:2px;background:#fff"></i><i class="abs" style="left:974px;top:96px;width:2px;height:2px;background:#27407a"></i><i class="abs" style="left:975px;top:101px;width:2px;height:2px;background:#fff"></i><i class="abs" style="left:974px;top:100px;width:2px;height:2px;background:#27407a"></i>
<svg style="left:980px;top:87px" width="16" height="16" viewBox="0 0 16 16"><path d="M1.500 1V16M15.500 1V16" stroke="#000" stroke-width="1.200"/><path d="M2 5.500H15" stroke="#8c1c84" stroke-width="1"/><path d="M4.500 3L2 5.500L4.500 8M12.500 3L15 5.500L12.500 8" fill="none" stroke="#8c1c84" stroke-width="1"/></svg>
<svg style="left:1002px;top:87px" width="16" height="16" viewBox="0 0 16 16"><path d="M2.500 3.500L13 14" stroke="#8c1c84" stroke-width="1"/><path d="M0 5.500L4.500 1M11 16.500L15.500 12" stroke="#222" stroke-width="1.100"/><path d="M2.500 6.500V3.500H5.500M13 11V14H10" fill="none" stroke="#8c1c84" stroke-width="1"/></svg>
<svg style="left:1024px;top:87px" width="16" height="16" viewBox="0 0 16 16"><circle cx="8" cy="9" r="7.200" fill="none" stroke="#000" stroke-width="1.200"/><path d="M4 5L12 13" stroke="#8c1c84" stroke-width="1"/><path d="M4 8V5H7M12 10V13H9" fill="none" stroke="#8c1c84" stroke-width="1"/></svg>
<!-- left tab strip -->
<div class="abs" style="left:1px;top:110px;width:22px;height:538px;background:#a3c0f0"></div>
<div class="abs" style="left:20px;top:110px;width:4px;height:538px;background:linear-gradient(#cfe0f8 0,#c6d9f6 70px,#a3c0f0 95px)"></div>
<div class="vtab" style="top:112px;height:85px;background:linear-gradient(90deg,#fdf3e6,#fbe3c6 60%,#fcd5a4)"></div>
<div class="vtab" style="top:211px;height:89px;background:linear-gradient(90deg,#ffe3b8,#ffd192 60%,#ffc477)"></div>
<svg style="left:3px;top:116px" width="16" height="16" viewBox="0 0 16 16"><path d="M8 15L1.8 8.5C-0.5 5.5 1 2 4 2C6 2 7.3 3.2 8 4.8C8.7 3.2 10 2 12 2C15 2 16.5 5.5 14.2 8.5Z" fill="#e81010" stroke="#7a0000" stroke-width="1"/><path d="M2.500 4.500C3.500 3 6 3.200 7 5.200L4.500 8.200C2.800 7.500 2 5.800 2.500 4.500Z" fill="#fff"/></svg>
<svg style="left:3px;top:215px" width="16" height="16" viewBox="0 0 16 16"><path d="M1.500 14.500V3.500L3.500 1.500H8L10 3.500H14.500L15.500 4.500V14.500Z" fill="#ffff33" stroke="#8a8a00" stroke-width="1"/></svg>
<div class="abs" style="left:18.30px;top:137.00px;font-size:13px;line-height:15.60px;color:#1a1a1a;white-space:nowrap;transform-origin:0 0;transform:rotate(90deg) scaleX(0.9178);">Favourites</div>
<div class="abs" style="left:18.30px;top:235.20px;font-size:13px;line-height:15.60px;color:#1a1a1a;white-space:nowrap;transform-origin:0 0;transform:rotate(90deg) scaleX(0.9126);">Documents</div>
<!-- symbols panel -->
<div class="abs" style="left:24px;top:110px;width:205px;height:538px;background:#e9f0fb"></div><div class="abs" style="left:223px;top:110px;width:5px;height:538px;background:linear-gradient(90deg,#e4edf9,#c4d7f2)"></div>
<div class="abs" style="left:24px;top:110px;width:199px;height:25px;border-radius:3px 0 0 0;background:linear-gradient(#ffdcaa 0%,#ffc477 35%,#ffab4a 75%,#ffa53f 100%)"></div>
<i class="abs" style="left:30px;top:117px;width:2px;height:2px;background:#fff8e8"></i><i class="abs" style="left:29px;top:116px;width:2px;height:2px;background:#3a2a10"></i><i class="abs" style="left:30px;top:121px;width:2px;height:2px;background:#fff8e8"></i><i class="abs" style="left:29px;top:120px;width:2px;height:2px;background:#3a2a10"></i><i class="abs" style="left:30px;top:125px;width:2px;height:2px;background:#fff8e8"></i><i class="abs" style="left:29px;top:124px;width:2px;height:2px;background:#3a2a10"></i><i class="abs" style="left:30px;top:129px;width:2px;height:2px;background:#fff8e8"></i><i class="abs" style="left:29px;top:128px;width:2px;height:2px;background:#3a2a10"></i>
<div class="abs" style="left:37.00px;top:115.94px;font-size:12px;line-height:14.40px;color:#000;white-space:nowrap;transform-origin:0 0;transform:scaleX(0.9266);font-weight:bold;">Symbols Graphically</div>
<svg style="left:190px;top:114px" width="30" height="16" viewBox="190 114 30 16" fill="none" stroke="#000"><path d="M193 116.500H197.500M193.500 116.500V123.500M196.500 116.500V123.500" stroke-width="1"/><path d="M195.500 116.500V123.500" stroke-width="1"/><path d="M191 123.500H199M194.500 124V128" stroke-width="1"/><path d="M207.500 117L215 124.500M215 117L207.500 124.500" stroke-width="1.500"/></svg>
<div class="abs" style="left:27px;top:143px;width:193px;height:24px;background:#e1e1e1;border:1px solid #adadad"></div>
<div class="abs" style="left:31.50px;top:147.05px;font-size:14px;line-height:16.80px;color:#000;white-space:nowrap;transform-origin:0 0;transform:scaleX(0.9349);font-weight:bold;">others</div>
<svg style="left:205px;top:152px" width="10" height="6" viewBox="0 0 10 6"><path d="M.5 .5L5 5L9.500 .5" fill="none" stroke="#404040" stroke-width="1.1"/></svg>
<div class="abs" style="left:24px;top:173px;width:199px;height:476px;background:#fff;border:1px solid #82878f;border-bottom:none"></div>
<div class="abs" style="left:28px;top:177px;width:190px;height:74px;background:#ff8080"></div>
<div class="abs" style="left:147.20px;top:180.05px;font-size:14px;line-height:16.80px;color:#00006e;white-space:nowrap;transform-origin:0 0;transform:scaleX(0.9596);font-weight:bold;text-shadow:0 0 1px rgba(255,255,255,.55);">hydraulics</div>
<div class="abs" style="left:28px;top:257px;width:190px;height:74px;background:#ff9b80"></div>
<div class="abs" style="left:120.50px;top:260.05px;font-size:14px;line-height:16.80px;color:#00006e;white-space:nowrap;transform-origin:0 0;transform:scaleX(0.9732);font-weight:bold;text-shadow:0 0 1px rgba(255,255,255,.55);">miscellaneous</div>
<div class="abs" style="left:28px;top:337px;width:190px;height:74px;background:#ffbb80"></div>
<div class="abs" style="left:174.40px;top:340.05px;font-size:14px;line-height:16.80px;color:#00006e;white-space:nowrap;transform-origin:0 0;transform:scaleX(0.9349);font-weight:bold;text-shadow:0 0 1px rgba(255,255,255,.55);">others</div>
<div class="abs" style="left:28px;top:417px;width:190px;height:74px;background:#ffd580"></div>
<div class="abs" style="left:192.20px;top:420.05px;font-size:14px;line-height:16.80px;color:#00006e;white-space:nowrap;transform-origin:0 0;transform:scaleX(0.9512);font-weight:bold;text-shadow:0 0 1px rgba(255,255,255,.55);">PID</div>
<div class="abs" style="left:28px;top:497px;width:190px;height:74px;background:#ffff80"></div>
<div class="abs" style="left:83.50px;top:500.05px;font-size:14px;line-height:16.80px;color:#00006e;white-space:nowrap;transform-origin:0 0;transform:scaleX(0.9614);font-weight:bold;text-shadow:0 0 1px rgba(255,255,255,.55);">pneumatic diagrams</div>
<div class="abs" style="left:28px;top:577px;width:190px;height:72px;background:#d5ff80"></div>
<div class="abs" style="left:103.20px;top:580.05px;font-size:14px;line-height:16.80px;color:#00006e;white-space:nowrap;transform-origin:0 0;transform:scaleX(0.9592);font-weight:bold;text-shadow:0 0 1px rgba(255,255,255,.55);">trunking systems</div>
<i class="abs" style="left:200px;top:435px;width:4px;height:1px;background:#00006e"></i>
<svg style="left:41px;top:228.5px" width="22" height="7" viewBox="0 0 22 7" fill="none" stroke="#000" stroke-width="1"><path d="M0 3.500H22" stroke-width="1"/><rect x="2" y="1.500" width="5" height="4" fill="#000"/><rect x="8.500" y="1" width="4" height="5" fill="#000"/><path d="M13 1.500H18V5.500H13M19.500 1V6" stroke-width="1.2"/><rect x="14" y="2.500" width="3" height="2" fill="#ff8080" stroke="none"/></svg>
<svg style="left:80px;top:228.5px" width="22" height="7" viewBox="0 0 22 7" fill="none" stroke="#000" stroke-width="1"><path d="M0 3.500H22" stroke-width="1"/><rect x="2" y="1.500" width="5" height="4" fill="#000"/><rect x="8.500" y="1" width="4" height="5" fill="#000"/><path d="M13 1.500H18V5.500H13M19.500 1V6" stroke-width="1.2"/><rect x="14" y="2.500" width="3" height="2" fill="#ff8080" stroke="none"/></svg>
<svg style="left:120px;top:218px" width="26" height="28" viewBox="0 0 26 28" fill="none" stroke="#000" stroke-width="1"><circle cx="10.500" cy="14.500" r="8"/><path d="M10.500 1V8M10.500 22.500V27M18 12.500H25M18 16.500H25"/><path d="M9 6.500H12L10.500 8.500Z" fill="#000"/></svg>
<svg style="left:41px;top:303px" width="26" height="18" viewBox="0 0 26 18" fill="none" stroke="#000" stroke-width="1"><path d="M1 9.500H24M4.500 9.500V17M12.500 9.500V17M20.500 9.500V17" stroke-width="1.1"/><path d="M3 1V8M6 3V8M11 1V8M14 3V8M19 1V8M22 3V8" stroke-width="1.6" stroke-dasharray="2 1"/><path d="M1 13.500H24" stroke-width=".8" stroke-dasharray="1 1"/></svg>
<svg style="left:80px;top:299px" width="22" height="22" viewBox="0 0 22 22" fill="none" stroke="#000" stroke-width="1"><circle cx="11" cy="11" r="9.800"/><path d="M11 3.500V11M5 11.500H17M7 14.500H15M9 17.500H13"/></svg>
<svg style="left:116px;top:298px" width="28" height="22" viewBox="0 0 28 22" fill="none" stroke="#000" stroke-width="1"><path d="M1 9.500C1 -2 26.500 -2 26.500 9.500ZM7.500 9.500V21M20.500 9.500V21" stroke-width="1.1"/></svg>
<svg style="left:165px;top:306px" width="8" height="17" viewBox="0 0 8 17" fill="none" stroke="#000" stroke-width="1"><path d="M2 16.500V1.500H5.500V9.500H2" stroke-width="1.3"/></svg>
<svg style="left:43px;top:381px" width="18" height="13" viewBox="0 0 18 13" fill="none" stroke="#000" stroke-width="1"><path d="M1 11.500H16M1 11.500L16 1.500"/><path d="M11.500 4.500C13 6.500 13.500 9 13 11.500" stroke-width=".9"/></svg>
<svg style="left:86px;top:378px" width="11" height="28" viewBox="0 0 11 28" fill="none" stroke="#000" stroke-width="1"><path d="M5.500 1V27.500M1.500 8L5.500 1L9.500 8"/></svg>
<svg style="left:121px;top:383px" width="19" height="19" viewBox="0 0 19 19" fill="none" stroke="#000" stroke-width="1"><path d="M1 9.500H18M9.500 1V18" stroke-width="1.1"/></svg>
<svg style="left:157px;top:376px" width="15" height="31" viewBox="0 0 15 31" fill="none" stroke="#000" stroke-width="1"><path d="M12.500 1L3.500 14.500L10.500 14L3.500 27" stroke-width="1.600"/><path d="M1.500 21.500L2.500 29.500L8 24.500Z" fill="#000"/></svg>
<svg style="left:41px;top:456px" width="23" height="34" viewBox="0 0 23 34" fill="none" stroke="#000" stroke-width="1"><path d="M11.500 1V24M1.500 33V22L21.500 31.500V21.500" stroke-width="1.100"/></svg>
<svg style="left:82px;top:463px" width="18" height="20" viewBox="0 0 18 20" fill="none" stroke="#000" stroke-width="1"><rect x="1.500" y="1.500" width="15" height="15" stroke-width="1.300"/><path d="M3.500 3V15M14.500 3V15" stroke-dasharray="3 2" stroke-width=".9"/><path d="M9 16.500V19.500"/></svg>
<svg style="left:119px;top:463px" width="18" height="18" viewBox="0 0 18 18" fill="none" stroke="#000" stroke-width="1"><path d="M5.500 1V17M15.500 1V17M1 9H15.500M5.500 3.500H15.500M5.500 14.500H15.500" stroke-width="1.200"/><path d="M8.500 6.500H12.500V11.500H8.500Z" stroke-width=".9"/></svg>
<svg style="left:158px;top:465px" width="23" height="14" viewBox="0 0 23 14" fill="none" stroke="#000" stroke-width="1"><path d="M1 1.500H21.500L17.500 12.500H5.500Z" stroke-width="1.300"/><path d="M7.500 3.500H15.500V10.500H7.500ZM7.500 3.500L15.500 10.500M15.500 3.500L7.500 10.500" stroke-width=".8"/></svg>
<svg style="left:41px;top:546px" width="24" height="12" viewBox="0 0 24 12" fill="none" stroke="#000" stroke-width="1"><rect x="2.500" y="2.500" width="16" height="7" stroke-width="1.300"/><path d="M0 6H2.500M18.500 6H23M5.500 6H17" stroke-width="1"/><path d="M9.500 0V3" stroke-width="1"/></svg>
<svg style="left:75px;top:547px" width="28" height="10" viewBox="0 0 28 10" fill="none" stroke="#000" stroke-width="1"><path d="M0 5.500H27" stroke-width="1.200"/><rect x="3" y="3" width="4" height="5" fill="#000"/><path d="M10 3.500H15V7.500H10ZM17 2V9M20 2V9M22.500 3V8" stroke-width="1.200"/><path d="M1.500 2L3 4" stroke-width=".8"/></svg>
<svg style="left:120px;top:546px" width="21" height="12" viewBox="0 0 21 12" fill="none" stroke="#000" stroke-width="1"><rect x="1.500" y="2.500" width="16" height="8" stroke-width="1.300"/><path d="M17.500 6.500H20.500M4 6.500H11" stroke-width="1"/><path d="M9.500 10V12"/></svg>
<svg style="left:156px;top:541px" width="28" height="29" viewBox="0 0 28 29" fill="none" stroke="#000" stroke-width="1"><path d="M13.500 1.500L23.500 11.500L13.500 21.500L3.500 11.500ZM13.500 1.500V16M13.500 21.500V28" stroke-width="1.100"/><path d="M9.500 14.500L13.500 18.500L17.500 14.500" stroke-width=".9"/><path d="M1 11.500H2M25 11.500H26" stroke-width=".8"/></svg>
<svg style="left:43px;top:619px" width="19" height="23" viewBox="0 0 19 23" fill="none" stroke="#000" stroke-width="1"><path d="M9.500 1V20.500M1 20.500H18M1.500 18.500V22.500M17.500 18.500V22.500" stroke-width="1.100"/><path d="M9.500 6.500L5.500 14.500H13.500Z"/></svg>
<svg style="left:77px;top:618px" width="29" height="28" viewBox="0 0 29 28" fill="none" stroke="#000" stroke-width="1"><path d="M1 14.500H28M14.500 1V27M1.500 11.500V17.500M27.500 11.500V17.500M11.500 1.500H17.500M11.500 26.500H17.500" stroke-width="1.200"/></svg>
<svg style="left:113px;top:628px" width="35" height="8" viewBox="0 0 35 8" fill="none" stroke="#000" stroke-width="1"><path d="M1 4.500H34M1.500 1.500V7.500M33.500 1.500V7.500M17.500 2.500V6.500" stroke-width="1.100"/></svg>
<svg style="left:153px;top:628px" width="34" height="8" viewBox="0 0 34 8" fill="none" stroke="#000" stroke-width="1"><path d="M1 4.500H33M1.500 1.500V7.500M32.500 1.500V7.500" stroke-width="1.100"/><path d="M13 5.500H19" stroke-width="1.600"/></svg>
<!-- MDI client area -->
<div class="abs" style="left:229px;top:110px;width:828px;height:538px;background:#a9c6f3"></div>
<div class="abs" style="left:228px;top:110px;width:3px;height:538px;background:#6a6e76"></div>
<div class="abs" style="left:228px;top:141px;width:1px;height:507px;background:#a0a6b0"></div>
<div class="abs" style="left:228px;top:110px;width:2px;height:31px;background:#fff"></div>
<div class="abs" style="left:1052px;top:110px;width:4px;height:364px;background:#fdebd8"></div>
<div class="abs" style="left:1052px;top:135px;width:4px;height:12px;background:#b2cdf6;border-top:1px solid #6a86b8;border-bottom:1px solid #6a86b8"></div>
<div class="abs" style="left:1052px;top:219px;width:4px;height:12px;background:#b2cdf6;border-top:1px solid #6a86b8;border-bottom:1px solid #6a86b8"></div>
<div class="abs" style="left:1052px;top:308px;width:4px;height:22px;background:#b2cdf6;border-top:1px solid #6a86b8;border-bottom:1px solid #6a86b8"></div>
<div class="abs" style="left:1052px;top:398px;width:4px;height:13px;background:#b2cdf6;border-top:1px solid #6a86b8;border-bottom:1px solid #6a86b8"></div>
<div class="abs" style="left:1052px;top:171px;width:2px;height:10px;background:#0a0a5a"></div><div class="abs" style="left:1052px;top:257px;width:1px;height:6px;background:#222"></div>
<div class="abs" style="left:1052px;top:474px;width:4px;height:174px;background:#a9c6f3;border-top:1px solid #5a76a8"></div>
<!-- P&amp;ID popup window -->
<div id="pid">
<div class="pidtitle"></div>
<div class="abs" style="left:6.60px;top:5.94px;font-size:12px;line-height:14.40px;color:#a3adb8;white-space:nowrap;transform-origin:0 0;transform:scaleX(0.9533);">P&amp;ID</div>
<div class="pidclose"><svg style="left:9px;top:2px" width="13" height="11" viewBox="0 0 13 11"><path d="M2.500 2L10.500 9M10.500 2L2.500 9" stroke="#fff" stroke-width="4.600" stroke-linecap="square"/><path d="M2.500 2L10.500 9M10.500 2L2.500 9" stroke="#8c9097" stroke-width="2.700"/></svg></div>
<div class="pidframe"></div>
<div id="pidin">
<svg width="0" height="0"><defs><linearGradient id="tg" x1="0" y1="0" x2="0" y2="1"><stop offset="0" stop-color="#ffffb4"/><stop offset="1" stop-color="#ffffaa"/></linearGradient></defs></svg>
<div class="abs" style="left:13.30px;top:2.94px;font-size:12px;line-height:14.40px;color:#1c3a80;white-space:nowrap;transform-origin:0 0;transform:scaleX(0.9688);">agitators, stirers</div>
<i class="abs" style="left:100px;top:9px;width:665px;height:1px;background:#a9bfd6"></i>
<div class="abs" style="left:13.30px;top:123.94px;font-size:12px;line-height:14.40px;color:#1c3a80;white-space:nowrap;transform-origin:0 0;">centrifuges</div>
<i class="abs" style="left:76.2px;top:130px;width:688.8px;height:1px;background:#a9bfd6"></i>
<div class="abs" style="left:13.30px;top:245.94px;font-size:12px;line-height:14.40px;color:#1c3a80;white-space:nowrap;transform-origin:0 0;transform:scaleX(0.9855);">compressors, vacuum pumps, blowers, fans</div>
<i class="abs" style="left:248px;top:252px;width:517px;height:1px;background:#a9bfd6"></i>
<div class="abs" style="left:13.30px;top:463.94px;font-size:12px;line-height:14.40px;color:#1c3a80;white-space:nowrap;transform-origin:0 0;transform:scaleX(0.9497);">crushers</div>
<i class="abs" style="left:61px;top:469px;width:704px;height:1px;background:#a9bfd6"></i>
<svg style="left:11px;top:21px" width="60" height="64" viewBox="0 0 60 64"><path d="M6.500 .5H53.500Q55 .5 56 1.500L58.500 4Q59.500 5 59.500 6.500V57.500Q59.500 59 58.500 60L56 62.500Q55 63.500 53.500 63.500H6.500Q5 63.500 4 62.500L1.500 60Q.5 59 .5 57.500V6.500Q.5 5 1.500 4L4 1.500Q5 .5 6.500 .5Z" fill="url(#tg)" stroke="#d5cd64"/><g fill="none" stroke="#000" stroke-width="1" shape-rendering="crispEdges"><path d="M30.500 4V47M13.500 57.500V38L47.500 57.500V38"/></g></svg>
<svg style="left:81px;top:21px" width="60" height="64" viewBox="0 0 60 64"><path d="M6.500 .5H53.500Q55 .5 56 1.500L58.500 4Q59.500 5 59.500 6.500V57.500Q59.500 59 58.500 60L56 62.500Q55 63.500 53.500 63.500H6.500Q5 63.500 4 62.500L1.500 60Q.5 59 .5 57.500V6.500Q.5 5 1.500 4L4 1.500Q5 .5 6.500 .5Z" fill="url(#tg)" stroke="#d5cd64"/><g fill="none" stroke="#000" stroke-width="1" shape-rendering="crispEdges"><path d="M30.500 4V57.500M17.500 43.500H43"/><path d="M17.500 50.500C22 59.500 39 59.500 43 50.500"/></g></svg>
<svg style="left:151px;top:21px" width="60" height="64" viewBox="0 0 60 64"><path d="M6.500 .5H53.500Q55 .5 56 1.500L58.500 4Q59.500 5 59.500 6.500V57.500Q59.500 59 58.500 60L56 62.500Q55 63.500 53.500 63.500H6.500Q5 63.500 4 62.500L1.500 60Q.5 59 .5 57.500V6.500Q.5 5 1.500 4L4 1.500Q5 .5 6.500 .5Z" fill="url(#tg)" stroke="#d5cd64"/><g fill="none" stroke="#000" stroke-width="1" shape-rendering="crispEdges"><path d="M30.500 4V57.500M17.500 43.500H43M17.500 57.500H43"/></g></svg>
<svg style="left:221px;top:21px" width="60" height="64" viewBox="0 0 60 64"><path d="M6.500 .5H53.500Q55 .5 56 1.500L58.500 4Q59.500 5 59.500 6.500V57.500Q59.500 59 58.500 60L56 62.500Q55 63.500 53.500 63.500H6.500Q5 63.500 4 62.500L1.500 60Q.5 59 .5 57.500V6.500Q.5 5 1.500 4L4 1.500Q5 .5 6.500 .5Z" fill="url(#tg)" stroke="#d5cd64"/><g fill="none" stroke="#000" stroke-width="1" shape-rendering="crispEdges"><path d="M30.500 4V50.500M23 50.500H38"/><rect x="17.500" y="43.500" width="5" height="13"/><rect x="37.500" y="43.500" width="5" height="13"/></g></svg>
<svg style="left:291px;top:21px" width="60" height="64" viewBox="0 0 60 64"><path d="M6.500 .5H53.500Q55 .5 56 1.500L58.500 4Q59.500 5 59.500 6.500V57.500Q59.500 59 58.500 60L56 62.500Q55 63.500 53.500 63.500H6.500Q5 63.500 4 62.500L1.500 60Q.5 59 .5 57.500V6.500Q.5 5 1.500 4L4 1.500Q5 .5 6.500 .5Z" fill="url(#tg)" stroke="#d5cd64"/><g fill="none" stroke="#000" stroke-width="1" shape-rendering="crispEdges"><path d="M30.500 4V30.500"/><rect x="17.500" y="30.500" width="25" height="26"/></g></svg>
<svg style="left:361px;top:21px" width="60" height="64" viewBox="0 0 60 64"><path d="M6.500 .5H53.500Q55 .5 56 1.500L58.500 4Q59.500 5 59.500 6.500V57.500Q59.500 59 58.500 60L56 62.500Q55 63.500 53.500 63.500H6.500Q5 63.500 4 62.500L1.500 60Q.5 59 .5 57.500V6.500Q.5 5 1.500 4L4 1.500Q5 .5 6.500 .5Z" fill="url(#tg)" stroke="#d5cd64"/><g fill="none" stroke="#000" stroke-width="1" shape-rendering="crispEdges"><path d="M30.500 4V57.500"/><rect x="17.500" y="43.500" width="25" height="13"/><path d="M17.500 57.500L30 44M30.500 57.500L43 44"/></g></svg>
<svg style="left:431px;top:21px" width="60" height="64" viewBox="0 0 60 64"><path d="M6.500 .5H53.500Q55 .5 56 1.500L58.500 4Q59.500 5 59.500 6.500V57.500Q59.500 59 58.500 60L56 62.500Q55 63.500 53.500 63.500H6.500Q5 63.500 4 62.500L1.500 60Q.5 59 .5 57.500V6.500Q.5 5 1.500 4L4 1.500Q5 .5 6.500 .5Z" fill="url(#tg)" stroke="#d5cd64"/><g fill="none" stroke="#000" stroke-width="1" shape-rendering="crispEdges"><path d="M30.500 4V53.500"/><path d="M17 37.500L43.500 43.500L18 50L42.500 57"/></g></svg>
<svg style="left:501px;top:21px" width="60" height="64" viewBox="0 0 60 64"><path d="M6.500 .5H53.500Q55 .5 56 1.500L58.500 4Q59.500 5 59.500 6.500V57.500Q59.500 59 58.500 60L56 62.500Q55 63.500 53.500 63.500H6.500Q5 63.500 4 62.500L1.500 60Q.5 59 .5 57.500V6.500Q.5 5 1.500 4L4 1.500Q5 .5 6.500 .5Z" fill="url(#tg)" stroke="#d5cd64"/><g fill="none" stroke="#000" stroke-width="1" shape-rendering="crispEdges"><path d="M30.500 15V42.500"/><path d="M22 43C23.500 39 28 38.500 30.500 42.500C33 46.500 35.500 46.500 37.500 44.500"/></g></svg>
<svg style="left:571px;top:21px" width="60" height="64" viewBox="0 0 60 64"><path d="M6.500 .5H53.500Q55 .5 56 1.500L58.500 4Q59.500 5 59.500 6.500V57.500Q59.500 59 58.500 60L56 62.500Q55 63.500 53.500 63.500H6.500Q5 63.500 4 62.500L1.500 60Q.5 59 .5 57.500V6.500Q.5 5 1.500 4L4 1.500Q5 .5 6.500 .5Z" fill="url(#tg)" stroke="#d5cd64"/><g fill="none" stroke="#000" stroke-width="1" shape-rendering="crispEdges"><path d="M30.500 15V42.500"/><path d="M30.500 42.500C27 38.500 22.500 40 22.500 42.500C22.500 45 27 46.500 30.500 42.500C34 38.500 39 40 39 42.500C39 45 34 46.500 30.500 42.500Z"/></g></svg>
<svg style="left:641px;top:21px" width="60" height="64" viewBox="0 0 60 64"><path d="M6.500 .5H53.500Q55 .5 56 1.500L58.500 4Q59.500 5 59.500 6.500V57.500Q59.500 59 58.500 60L56 62.500Q55 63.500 53.500 63.500H6.500Q5 63.500 4 62.500L1.500 60Q.5 59 .5 57.500V6.500Q.5 5 1.500 4L4 1.500Q5 .5 6.500 .5Z" fill="url(#tg)" stroke="#d5cd64"/><g fill="none" stroke="#000" stroke-width="1" shape-rendering="crispEdges"><path d="M30.500 4V57"/><rect x="17.500" y="43.500" width="25" height="12"/><path d="M23.500 43.500V55.500M37.500 43.500V55.500"/></g></svg>
<svg style="left:11px;top:142px" width="60" height="64" viewBox="0 0 60 64"><path d="M6.500 .5H53.500Q55 .5 56 1.500L58.500 4Q59.500 5 59.500 6.500V57.500Q59.500 59 58.500 60L56 62.500Q55 63.500 53.500 63.500H6.500Q5 63.500 4 62.500L1.500 60Q.5 59 .5 57.500V6.500Q.5 5 1.500 4L4 1.500Q5 .5 6.500 .5Z" fill="url(#tg)" stroke="#d5cd64"/><g fill="none" stroke="#000" stroke-width="1" shape-rendering="crispEdges"><rect x="14.500" y="14.500" width="31" height="31"/><path d="M30.500 42V50"/><path d="M18.500 18V41.500M42.500 18V41.500" stroke-dasharray="5 3 8 3 5 3"/><path d="M18 41.500H43"/></g></svg>
<svg style="left:81px;top:142px" width="60" height="64" viewBox="0 0 60 64"><path d="M6.500 .5H53.500Q55 .5 56 1.500L58.500 4Q59.500 5 59.500 6.500V57.500Q59.500 59 58.500 60L56 62.500Q55 63.500 53.500 63.500H6.500Q5 63.500 4 62.500L1.500 60Q.5 59 .5 57.500V6.500Q.5 5 1.500 4L4 1.500Q5 .5 6.500 .5Z" fill="url(#tg)" stroke="#d5cd64"/><g fill="none" stroke="#000" stroke-width="1" shape-rendering="crispEdges"><rect x="14.500" y="14.500" width="31" height="31"/><path d="M30.500 42V50"/><path d="M18.500 18V41.500H42.500V18"/></g></svg>
<svg style="left:151px;top:142px" width="60" height="64" viewBox="0 0 60 64"><path d="M6.500 .5H53.500Q55 .5 56 1.500L58.500 4Q59.500 5 59.500 6.500V57.500Q59.500 59 58.500 60L56 62.500Q55 63.500 53.500 63.500H6.500Q5 63.500 4 62.500L1.500 60Q.5 59 .5 57.500V6.500Q.5 5 1.500 4L4 1.500Q5 .5 6.500 .5Z" fill="url(#tg)" stroke="#d5cd64"/><g fill="none" stroke="#000" stroke-width="1" shape-rendering="crispEdges"><rect x="14.500" y="14.500" width="31" height="31"/><path d="M30.500 42V50"/><path d="M26.500 18L18.500 41.500H42.500L34.500 18"/></g></svg>
<svg style="left:221px;top:142px" width="60" height="64" viewBox="0 0 60 64"><path d="M6.500 .5H53.500Q55 .5 56 1.500L58.500 4Q59.500 5 59.500 6.500V57.500Q59.500 59 58.500 60L56 62.500Q55 63.500 53.500 63.500H6.500Q5 63.500 4 62.500L1.500 60Q.5 59 .5 57.500V6.500Q.5 5 1.500 4L4 1.500Q5 .5 6.500 .5Z" fill="url(#tg)" stroke="#d5cd64"/><g fill="none" stroke="#000" stroke-width="1" shape-rendering="crispEdges"><rect x="14.500" y="14.500" width="31" height="31"/><path d="M30.500 18V49.500M18 41.500H42.500M18 23.500L30.500 17.500L42.500 23.500M18 31.500L30.500 25.500L42.500 31.500"/></g></svg>
<svg style="left:291px;top:142px" width="60" height="64" viewBox="0 0 60 64"><path d="M6.500 .5H53.500Q55 .5 56 1.500L58.500 4Q59.500 5 59.500 6.500V57.500Q59.500 59 58.500 60L56 62.500Q55 63.500 53.500 63.500H6.500Q5 63.500 4 62.500L1.500 60Q.5 59 .5 57.500V6.500Q.5 5 1.500 4L4 1.500Q5 .5 6.500 .5Z" fill="url(#tg)" stroke="#d5cd64"/><g fill="none" stroke="#000" stroke-width="1" shape-rendering="crispEdges"><rect x="14.500" y="14.500" width="31" height="31"/><path d="M18.500 18V42.500M10 30.500H22.500M22.500 21.500V38"/><path d="M18.500 18.500H42.500M18.500 42.500H42.500" stroke-dasharray="4 3.500 8 3 5.500 3"/></g></svg>
<svg style="left:361px;top:142px" width="60" height="64" viewBox="0 0 60 64"><path d="M6.500 .5H53.500Q55 .5 56 1.500L58.500 4Q59.500 5 59.500 6.500V57.500Q59.500 59 58.500 60L56 62.500Q55 63.500 53.500 63.500H6.500Q5 63.500 4 62.500L1.500 60Q.5 59 .5 57.500V6.500Q.5 5 1.500 4L4 1.500Q5 .5 6.500 .5Z" fill="url(#tg)" stroke="#d5cd64"/><g fill="none" stroke="#000" stroke-width="1" shape-rendering="crispEdges"><rect x="14.500" y="14.500" width="31" height="31"/><path d="M42.500 18.500H18.500V41.500H42.500M10 30.500H23L26.700 24L35 36.700L38.500 30.500"/></g></svg>
<svg style="left:431px;top:142px" width="60" height="64" viewBox="0 0 60 64"><path d="M6.500 .5H53.500Q55 .5 56 1.500L58.500 4Q59.500 5 59.500 6.500V57.500Q59.500 59 58.500 60L56 62.500Q55 63.500 53.500 63.500H6.500Q5 63.500 4 62.500L1.500 60Q.5 59 .5 57.500V6.500Q.5 5 1.500 4L4 1.500Q5 .5 6.500 .5Z" fill="url(#tg)" stroke="#d5cd64"/><g fill="none" stroke="#000" stroke-width="1" shape-rendering="crispEdges"><rect x="14.500" y="14.500" width="31" height="31"/><path d="M18.500 18V42.500M10 30.500H23L26.700 24L35 36.700L38.500 30.500"/><path d="M18.500 18.500H42.500M18.500 42.500H42.500" stroke-dasharray="4 3.500 8 3 5.500 3"/></g></svg>
<svg style="left:11px;top:263px" width="60" height="64" viewBox="0 0 60 64"><path d="M6.500 .5H53.500Q55 .5 56 1.500L58.500 4Q59.500 5 59.500 6.500V57.500Q59.500 59 58.500 60L56 62.500Q55 63.500 53.500 63.500H6.500Q5 63.500 4 62.500L1.500 60Q.5 59 .5 57.500V6.500Q.5 5 1.500 4L4 1.500Q5 .5 6.500 .5Z" fill="url(#tg)" stroke="#d5cd64"/><g fill="none" stroke="#000" stroke-width="1" shape-rendering="crispEdges"><path d="M20.500 14.500V45.500M40.500 14.500V45.500M20.500 20.500H40.500M20.500 39.500H40.500M10 30.500H28"/><ellipse cx="30.500" cy="26.300" rx="2.600" ry="4.200"/><ellipse cx="30.500" cy="34.600" rx="2.600" ry="4.200"/></g></svg>
<svg style="left:81px;top:263px" width="60" height="64" viewBox="0 0 60 64"><path d="M6.500 .5H53.500Q55 .5 56 1.500L58.500 4Q59.500 5 59.500 6.500V57.500Q59.500 59 58.500 60L56 62.500Q55 63.500 53.500 63.500H6.500Q5 63.500 4 62.500L1.500 60Q.5 59 .5 57.500V6.500Q.5 5 1.500 4L4 1.500Q5 .5 6.500 .5Z" fill="url(#tg)" stroke="#d5cd64"/><g fill="none" stroke="#000" stroke-width="1" shape-rendering="crispEdges"><circle cx="30.300" cy="30" r="24.700"/><path d="M20.600 7.400L9 42M40.300 7.400L52 42"/><path d="M30.40 31.20 C30.70 25.29 34.52 21.06 30.40 14.30 C26.27 21.06 30.10 25.29 30.40 31.20Z"/><path d="M30.40 31.20 C25.14 33.84 19.60 32.59 15.80 39.50 C23.68 39.77 25.44 34.37 30.40 31.20Z"/><path d="M30.40 31.20 C35.43 34.37 37.26 39.78 45.20 39.50 C41.30 32.58 35.73 33.84 30.40 31.20Z"/><path d="M30.500 38.500V49.500" stroke-width="2"/></g></svg>
<svg style="left:151px;top:263px" width="60" height="64" viewBox="0 0 60 64"><path d="M6.500 .5H53.500Q55 .5 56 1.500L58.500 4Q59.500 5 59.500 6.500V57.500Q59.500 59 58.500 60L56 62.500Q55 63.500 53.500 63.500H6.500Q5 63.500 4 62.500L1.500 60Q.5 59 .5 57.500V6.500Q.5 5 1.500 4L4 1.500Q5 .5 6.500 .5Z" fill="url(#tg)" stroke="#d5cd64"/><g fill="none" stroke="#000" stroke-width="1" shape-rendering="crispEdges"><path d="M12.300 23.500A19.400 19.400 0 0 1 30.500 10.500H54.500V29.500H48.500A19.400 19.400 0 0 1 11.800 36"/><path d="M20 47.500L10.500 57.500H50.500L41.500 47.500"/></g></svg>
<svg style="left:221px;top:263px" width="60" height="64" viewBox="0 0 60 64"><path d="M6.500 .5H53.500Q55 .5 56 1.500L58.500 4Q59.500 5 59.500 6.500V57.500Q59.500 59 58.500 60L56 62.500Q55 63.500 53.500 63.500H6.500Q5 63.500 4 62.500L1.500 60Q.5 59 .5 57.500V6.500Q.5 5 1.500 4L4 1.500Q5 .5 6.500 .5Z" fill="url(#tg)" stroke="#d5cd64"/><g fill="none" stroke="#000" stroke-width="1" shape-rendering="crispEdges"><circle cx="30.300" cy="30" r="24.700"/><path d="M20.600 7.400L9 42M40.300 7.400L52 42"/></g></svg>
<svg style="left:291px;top:263px" width="60" height="64" viewBox="0 0 60 64"><path d="M6.500 .5H53.500Q55 .5 56 1.500L58.500 4Q59.500 5 59.500 6.500V57.500Q59.500 59 58.500 60L56 62.500Q55 63.500 53.500 63.500H6.500Q5 63.500 4 62.500L1.500 60Q.5 59 .5 57.500V6.500Q.5 5 1.500 4L4 1.500Q5 .5 6.500 .5Z" fill="url(#tg)" stroke="#d5cd64"/><g fill="none" stroke="#000" stroke-width="1" shape-rendering="crispEdges"><circle cx="30.300" cy="30" r="24.700"/><path d="M5.600 29.500L30.300 5.300L55 28.500"/><path d="M16.800 19.800C25.500 28 25.500 42 17.800 50.500M44.200 19.800C36 28 36 42 43.200 50.500"/></g></svg>
<svg style="left:361px;top:263px" width="60" height="64" viewBox="0 0 60 64"><path d="M6.500 .5H53.500Q55 .5 56 1.500L58.500 4Q59.500 5 59.500 6.500V57.500Q59.500 59 58.500 60L56 62.500Q55 63.500 53.500 63.500H6.500Q5 63.500 4 62.500L1.500 60Q.5 59 .5 57.500V6.500Q.5 5 1.500 4L4 1.500Q5 .5 6.500 .5Z" fill="url(#tg)" stroke="#d5cd64"/><g fill="none" stroke="#000" stroke-width="1" shape-rendering="crispEdges"><circle cx="30.300" cy="30" r="24.700"/><path d="M20.600 7.400L9 42M40.300 7.400L52 42"/><path d="M30.40 31.20 C30.70 25.29 34.52 21.06 30.40 14.30 C26.27 21.06 30.10 25.29 30.40 31.20Z"/><path d="M30.40 31.20 C25.14 33.84 19.60 32.59 15.80 39.50 C23.68 39.77 25.44 34.37 30.40 31.20Z"/><path d="M30.40 31.20 C35.43 34.37 37.26 39.78 45.20 39.50 C41.30 32.58 35.73 33.84 30.40 31.20Z"/></g></svg>
<svg style="left:431px;top:263px" width="60" height="64" viewBox="0 0 60 64"><path d="M6.500 .5H53.500Q55 .5 56 1.500L58.500 4Q59.500 5 59.500 6.500V57.500Q59.500 59 58.500 60L56 62.500Q55 63.500 53.500 63.500H6.500Q5 63.500 4 62.500L1.500 60Q.5 59 .5 57.500V6.500Q.5 5 1.500 4L4 1.500Q5 .5 6.500 .5Z" fill="url(#tg)" stroke="#d5cd64"/><g fill="none" stroke="#000" stroke-width="1" shape-rendering="crispEdges"><circle cx="30.300" cy="30" r="24.700"/><path d="M20.600 7.400L9 42M40.300 7.400L52 42"/><circle cx="24.300" cy="31.200" r="5.800"/><circle cx="36.600" cy="31.200" r="5.800"/></g></svg>
<svg style="left:501px;top:263px" width="60" height="64" viewBox="0 0 60 64"><path d="M6.500 .5H53.500Q55 .5 56 1.500L58.500 4Q59.500 5 59.500 6.500V57.500Q59.500 59 58.500 60L56 62.500Q55 63.500 53.500 63.500H6.500Q5 63.500 4 62.500L1.500 60Q.5 59 .5 57.500V6.500Q.5 5 1.500 4L4 1.500Q5 .5 6.500 .5Z" fill="url(#tg)" stroke="#d5cd64"/><g fill="none" stroke="#000" stroke-width="1" shape-rendering="crispEdges"><circle cx="30.300" cy="30" r="24.700"/><path d="M20.600 7.400L9 42M40.300 7.400L52 42"/><path d="M28.700 15.300C24 17 24.500 21 28.500 23.500C35 27.500 35.500 31.500 30 35C25 38 24.500 41 26.700 43.300"/></g></svg>
<svg style="left:571px;top:263px" width="60" height="64" viewBox="0 0 60 64"><path d="M6.500 .5H53.500Q55 .5 56 1.500L58.500 4Q59.500 5 59.500 6.500V57.500Q59.500 59 58.500 60L56 62.500Q55 63.500 53.500 63.500H6.500Q5 63.500 4 62.500L1.500 60Q.5 59 .5 57.500V6.500Q.5 5 1.500 4L4 1.500Q5 .5 6.500 .5Z" fill="url(#tg)" stroke="#d5cd64"/><g fill="none" stroke="#000" stroke-width="1" shape-rendering="crispEdges"><circle cx="30.300" cy="30" r="24.700"/><path d="M20.600 7.400L9 42M40.300 7.400L52 42"/><circle cx="30.400" cy="34.700" r="9"/><path d="M30.500 21.500V25.500M30.500 46V50.500M18.500 28.800L22.300 30.700M42.400 28.800L38.500 30.700M20.500 44.500L23.500 41.500M40.500 44.500L37.500 41.500"/></g></svg>
<svg style="left:641px;top:263px" width="60" height="64" viewBox="0 0 60 64"><path d="M6.500 .5H53.500Q55 .5 56 1.500L58.500 4Q59.500 5 59.500 6.500V57.500Q59.500 59 58.500 60L56 62.500Q55 63.500 53.500 63.500H6.500Q5 63.500 4 62.500L1.500 60Q.5 59 .5 57.500V6.500Q.5 5 1.500 4L4 1.500Q5 .5 6.500 .5Z" fill="url(#tg)" stroke="#d5cd64"/><g fill="none" stroke="#000" stroke-width="1" shape-rendering="crispEdges"><circle cx="30.300" cy="30" r="24.700"/><path d="M20.600 7.400L9 42M40.300 7.400L52 42"/><path d="M30.500 23V40.500M19 40.500H41.500"/></g></svg>
<svg style="left:711px;top:263px" width="60" height="64" viewBox="0 0 60 64"><path d="M6.500 .5H53.500Q55 .5 56 1.500L58.500 4Q59.500 5 59.500 6.500V57.500Q59.500 59 58.500 60L56 62.500Q55 63.500 53.500 63.500H6.500Q5 63.500 4 62.500L1.500 60Q.5 59 .5 57.500V6.500Q.5 5 1.500 4L4 1.500Q5 .5 6.500 .5Z" fill="url(#tg)" stroke="#d5cd64"/><g fill="none" stroke="#000" stroke-width="1" shape-rendering="crispEdges"><circle cx="30.300" cy="30" r="24.700"/><path d="M20.600 7.400L9 42M40.300 7.400L52 42"/><rect x="20.500" y="25.500" width="20" height="20"/></g></svg>
<svg style="left:11px;top:333px" width="60" height="64" viewBox="0 0 60 64"><path d="M6.500 .5H53.500Q55 .5 56 1.500L58.500 4Q59.500 5 59.500 6.500V57.500Q59.500 59 58.500 60L56 62.500Q55 63.500 53.500 63.500H6.500Q5 63.500 4 62.500L1.500 60Q.5 59 .5 57.500V6.500Q.5 5 1.500 4L4 1.500Q5 .5 6.500 .5Z" fill="url(#tg)" stroke="#d5cd64"/><g fill="none" stroke="#000" stroke-width="1" shape-rendering="crispEdges"><circle cx="30.300" cy="30" r="24.700"/><path d="M20.600 7.400L9 42M40.300 7.400L52 42"/><path d="M30.40 31.20 C30.70 25.29 34.52 21.06 30.40 14.30 C26.27 21.06 30.10 25.29 30.40 31.20Z"/><path d="M30.40 31.20 C25.14 33.84 19.60 32.59 15.80 39.50 C23.68 39.77 25.44 34.37 30.40 31.20Z"/><path d="M30.40 31.20 C35.43 34.37 37.26 39.78 45.20 39.50 C41.30 32.58 35.73 33.84 30.40 31.20Z"/><path d="M20.500 42.800H40.500" stroke-width="2.200"/></g></svg>
<svg style="left:81px;top:333px" width="60" height="64" viewBox="0 0 60 64"><path d="M6.500 .5H53.500Q55 .5 56 1.500L58.500 4Q59.500 5 59.500 6.500V57.500Q59.500 59 58.500 60L56 62.500Q55 63.500 53.500 63.500H6.500Q5 63.500 4 62.500L1.500 60Q.5 59 .5 57.500V6.500Q.5 5 1.500 4L4 1.500Q5 .5 6.500 .5Z" fill="url(#tg)" stroke="#d5cd64"/><g fill="none" stroke="#000" stroke-width="1" shape-rendering="crispEdges"><circle cx="30.300" cy="30" r="24.700"/><path d="M20.600 7.400L9 42M40.300 7.400L52 42"/><path d="M9 41.500C20 48 41 48 52 41.500"/></g></svg>
<svg style="left:151px;top:333px" width="60" height="64" viewBox="0 0 60 64"><path d="M6.500 .5H53.500Q55 .5 56 1.500L58.500 4Q59.500 5 59.500 6.500V57.500Q59.500 59 58.500 60L56 62.500Q55 63.500 53.500 63.500H6.500Q5 63.500 4 62.500L1.500 60Q.5 59 .5 57.500V6.500Q.5 5 1.500 4L4 1.500Q5 .5 6.500 .5Z" fill="url(#tg)" stroke="#d5cd64"/><g fill="none" stroke="#000" stroke-width="1" shape-rendering="crispEdges"><circle cx="30.300" cy="30" r="24.700"/><path d="M20.600 7.400L9 42M40.300 7.400L52 42"/><path d="M13 30.500H22.500M38.500 30.500H48M30.500 44.500V54.500"/></g></svg>
<svg style="left:221px;top:333px" width="60" height="64" viewBox="0 0 60 64"><path d="M6.500 .5H53.500Q55 .5 56 1.500L58.500 4Q59.500 5 59.500 6.500V57.500Q59.500 59 58.500 60L56 62.500Q55 63.500 53.500 63.500H6.500Q5 63.500 4 62.500L1.500 60Q.5 59 .5 57.500V6.500Q.5 5 1.500 4L4 1.500Q5 .5 6.500 .5Z" fill="url(#tg)" stroke="#d5cd64"/><g fill="none" stroke="#000" stroke-width="1" shape-rendering="crispEdges"><circle cx="30.300" cy="30" r="24.700"/><path d="M20.600 7.400L9 42M40.300 7.400L52 42"/><path d="M30.500 15.500V45.500M23 15.500H38M23 45.500H38"/></g></svg>
<svg style="left:291px;top:333px" width="60" height="64" viewBox="0 0 60 64"><path d="M6.500 .5H53.500Q55 .5 56 1.500L58.500 4Q59.500 5 59.500 6.500V57.500Q59.500 59 58.500 60L56 62.500Q55 63.500 53.500 63.500H6.500Q5 63.500 4 62.500L1.500 60Q.5 59 .5 57.500V6.500Q.5 5 1.500 4L4 1.500Q5 .5 6.500 .5Z" fill="url(#tg)" stroke="#d5cd64"/><g fill="none" stroke="#000" stroke-width="1" shape-rendering="crispEdges"><circle cx="30.300" cy="30" r="24.700"/><path d="M20.600 7.400L9 42M40.300 7.400L52 42"/><path d="M18 33.500L30.400 20.500L43 33.500M18 45.500L30.400 33L43 45.500"/></g></svg>
<svg style="left:361px;top:333px" width="60" height="64" viewBox="0 0 60 64"><path d="M6.500 .5H53.500Q55 .5 56 1.500L58.500 4Q59.500 5 59.500 6.500V57.500Q59.500 59 58.500 60L56 62.500Q55 63.500 53.500 63.500H6.500Q5 63.500 4 62.500L1.500 60Q.5 59 .5 57.500V6.500Q.5 5 1.500 4L4 1.500Q5 .5 6.500 .5Z" fill="url(#tg)" stroke="#d5cd64"/><g fill="none" stroke="#000" stroke-width="1" shape-rendering="crispEdges"><circle cx="30.300" cy="30" r="24.700"/><path d="M20.600 7.400L9 42M40.300 7.400L52 42"/><circle cx="30" cy="30" r="9.700"/></g></svg>
<div class="abs" style="left:776px;top:0;width:17px;height:472px;background:#f0f0f0"></div>
<div class="abs" style="left:776px;top:17px;width:15px;height:49px;background:#cdcdcd"></div>
<svg style="left:779px;top:5px" width="9" height="7" viewBox="0 0 9 7"><path d="M1 5.500L4.500 2L8 5.500" fill="none" stroke="#5a5a5a" stroke-width="2.100"/></svg>
<svg style="left:779px;top:458px" width="9" height="7" viewBox="0 0 9 7"><path d="M1 1.500L4.500 5L8 1.500" fill="none" stroke="#5a5a5a" stroke-width="2.100"/></svg>
</div>
</div>
<!-- bottom scrollbar row -->
<div class="abs" style="left:231px;top:629px;width:27px;height:18px;background:linear-gradient(90deg,#ffff80,#ffff9c)"></div>
<div class="abs" style="left:258px;top:629px;width:1px;height:18px;background:#000"></div>
<i class="abs" style="left:254px;top:632px;width:2px;height:1px;background:#000"></i><i class="abs" style="left:254px;top:637px;width:2px;height:1px;background:#000"></i><i class="abs" style="left:252px;top:642px;width:4px;height:1px;background:#000"></i>
<div class="abs" style="left:259px;top:629px;width:574px;height:18px;background:#f0f0f0"></div>
<div class="abs" style="left:276px;top:629px;width:205px;height:17px;background:#cdcdcd"></div>
<svg style="left:263px;top:633px" width="7" height="9" viewBox="0 0 7 9"><path d="M5.500 1L2 4.500L5.500 8" fill="none" stroke="#5a5a5a" stroke-width="2.100"/></svg>
<svg style="left:799px;top:633px" width="7" height="9" viewBox="0 0 7 9"><path d="M1.500 1L5 4.500L1.500 8" fill="none" stroke="#5a5a5a" stroke-width="2.100"/></svg>
<div class="abs" style="left:834px;top:629px;width:200px;height:15px;background:#fff;border:1px solid #7a8594;border-top:none"></div>
<div class="abs" style="left:229px;top:646px;width:828px;height:2px;background:#e8eef8"></div>
<!-- status bar -->
<div id="status"></div>
<div class="abs" style="left:3.40px;top:651.94px;font-size:12px;line-height:14.40px;color:#000;white-space:nowrap;transform-origin:0 0;transform:scaleX(0.9284);">ProfiCAD 10.2.1</div>
<div class="abs" style="left:681.00px;top:651.94px;font-size:12px;line-height:14.40px;color:#000;white-space:nowrap;transform-origin:0 0;transform:scaleX(1.0194);">/1.</div>
<div class="abs" style="left:700.70px;top:651.94px;font-size:12px;line-height:14.40px;color:#000;white-space:nowrap;transform-origin:0 0;transform:scaleX(0.9826);">x=-4.0</div>
<div class="abs" style="left:739.50px;top:651.94px;font-size:12px;line-height:14.40px;color:#000;white-space:nowrap;transform-origin:0 0;transform:scaleX(0.9473);">y=30.0 (0)</div>
<div class="abs" style="left:970.50px;top:651.94px;font-size:12px;line-height:14.40px;color:#000;white-space:nowrap;transform-origin:0 0;transform:scaleX(0.9953);">NUM</div>
<i class="abs" style="left:934px;top:650px;width:1px;height:16px;background:#d4d4d4"></i><i class="abs" style="left:965px;top:650px;width:1px;height:16px;background:#d4d4d4"></i><i class="abs" style="left:1001px;top:650px;width:1px;height:16px;background:#d4d4d4"></i><i class="abs" style="left:1036px;top:650px;width:1px;height:16px;background:#d4d4d4"></i>
<svg style="left:1043px;top:654px" width="12" height="12" viewBox="0 0 12 12" fill="#b8b8b8"><rect x="9" y="1" width="2" height="2"/><rect x="5" y="5" width="2" height="2"/><rect x="9" y="5" width="2" height="2"/><rect x="1" y="9" width="2" height="2"/><rect x="5" y="9" width="2" height="2"/><rect x="9" y="9" width="2" height="2"/></svg>
<div class="abs" style="left:0;top:0;width:1px;height:668px;background:#2f7fb5"></div>
<div class="abs" style="left:1056px;top:0;width:1px;height:668px;background:#2f7fb5"></div>
<div class="abs" style="left:0;top:667px;width:1057px;height:1px;background:#3b8fb8"></div>
</div>
</body></html>
